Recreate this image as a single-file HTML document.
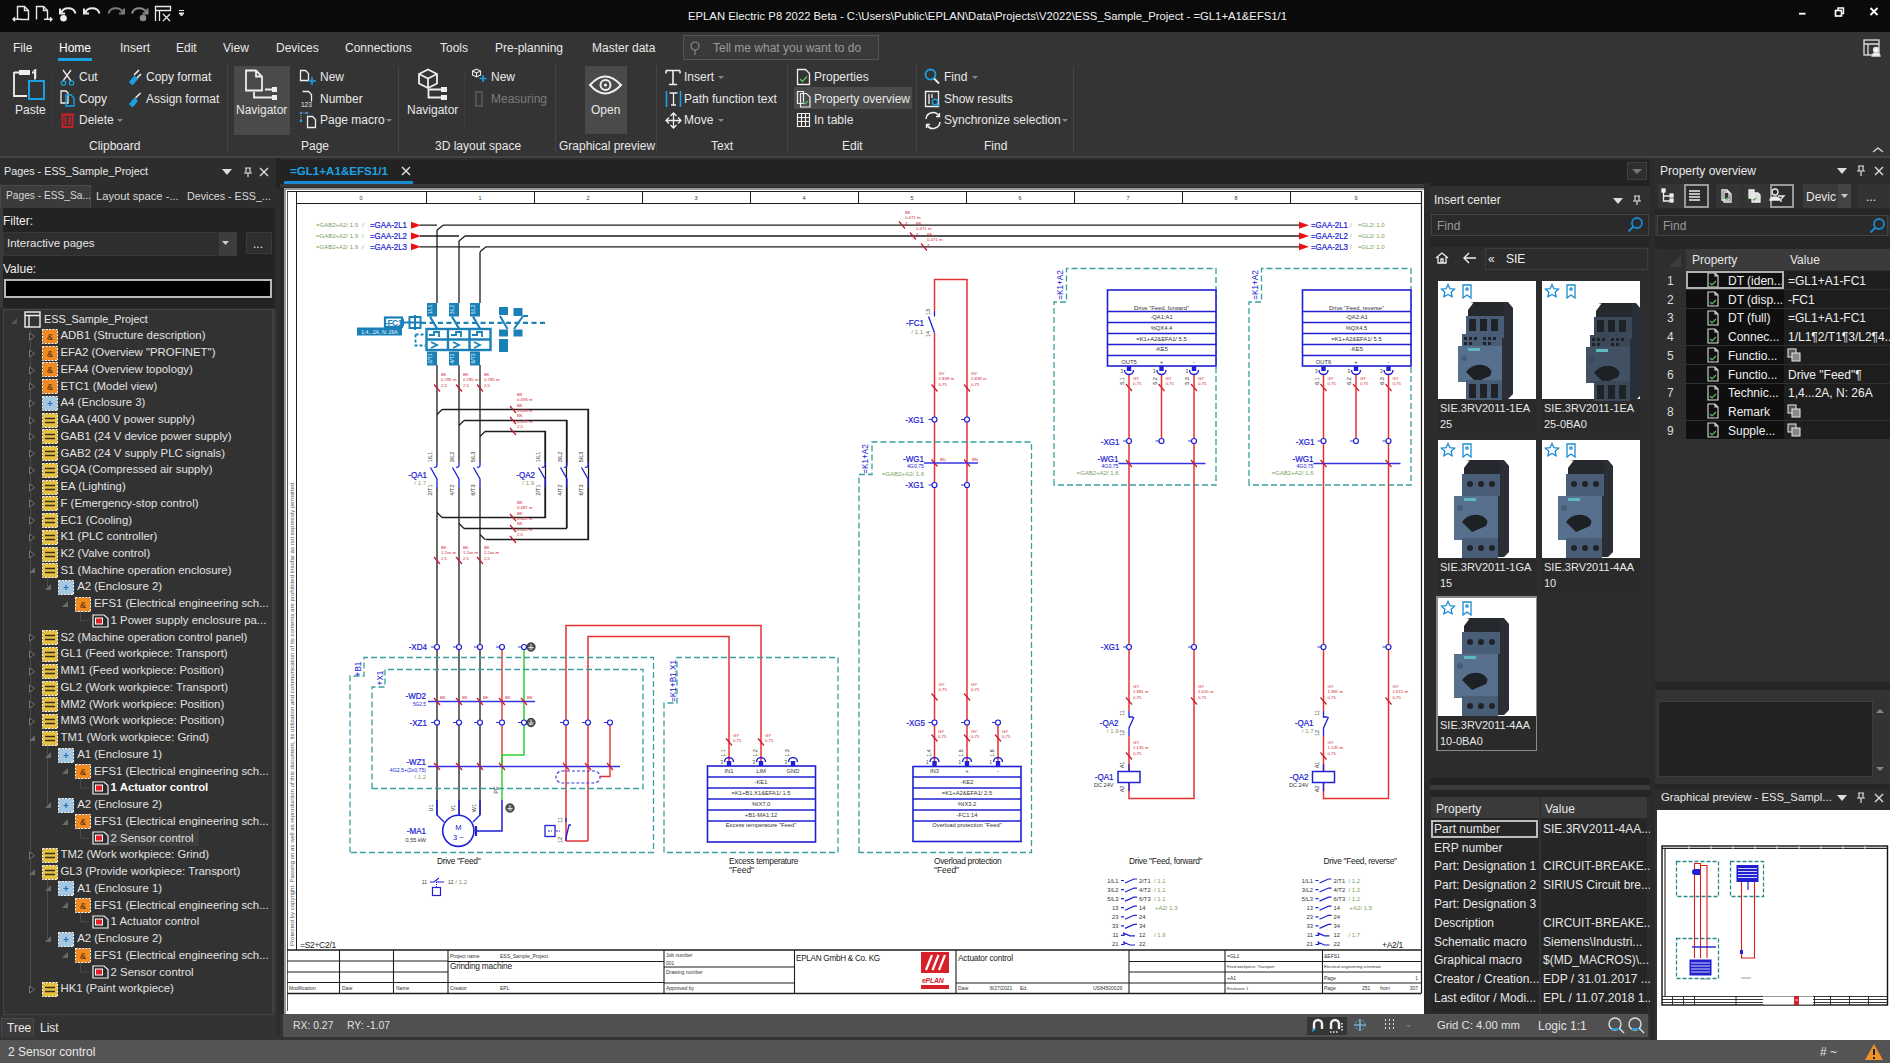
<!DOCTYPE html><html><head><meta charset="utf-8"><style>
html,body{margin:0;padding:0;}
body{width:1890px;height:1063px;position:relative;overflow:hidden;background:#333;font-family:"Liberation Sans", sans-serif;}
.a{position:absolute;}
.t{position:absolute;white-space:nowrap;line-height:1;font-family:"Liberation Sans", sans-serif;}
</style></head><body>
<div class="a" style="left:0px;top:0px;width:1890px;height:32px;background:#0a0a0a;"></div>
<div class="t" style="left:688px;top:11.4px;font-size:11.3px;color:#f0f0f0;">EPLAN Electric P8 2022 Beta - C:\Users\Public\EPLAN\Data\Projects\V2022\ESS_Sample_Project - =GL1+A1&amp;EFS1/1</div>
<svg class="a" style="left:0;top:0" width="200" height="32" viewBox="0 0 200 32" fill="none" stroke="#e8e8e8" stroke-width="1.4">
<path d="M17.5 19V6.5h7l4 4V19.5h-8" /><path d="M24.5 6.5v4h4"/><path d="M13 19.3h8 M15 17.3l-2 2 2 2"/>
<path d="M36.5 19.5V6.5h7l4 4V19" /><path d="M43.5 6.5v4h4"/><path d="M44 19.3h8 M50 17.3l2 2-2 2"/>
<path d="M61 13.5a7.5 7 0 0 1 14.5 0" stroke-width="2"/><path d="M60 8.5v5h5" stroke-width="2"/><circle cx="63.5" cy="18.3" r="3.3" fill="#f0f0f0" stroke="none"/>
<path d="M85 13.5a7.5 7 0 0 1 14.5 0" stroke-width="2"/><path d="M84 8.5v5h5" stroke-width="2"/>
<path d="M108.5 13.5a7.5 7 0 0 1 14.5 0" stroke="#7a7a7a" stroke-width="2"/><path d="M124 8.5v5h-5" stroke="#7a7a7a" stroke-width="2"/>
<path d="M132 13.5a7.5 7 0 0 1 14.5 0" stroke="#8a8a8a" stroke-width="2"/><path d="M147.5 8.5v5h-5" stroke="#8a8a8a" stroke-width="2"/><circle cx="143" cy="18" r="3.3" fill="#8a8a8a" stroke="none"/>
<path d="M155.5 21V6.5h15v4h-15 M159.5 10.5V21" stroke-width="1.3"/><path d="M163 14l7 7 M170 14l-7 7" stroke-width="1.3"/>
<path d="M179 10.5h5 M179 13h5l-2.5 3z" stroke-width="1" fill="#ddd"/>
</svg>
<svg class="a" style="left:1780px;top:0" width="110" height="32" viewBox="0 0 110 32" fill="none" stroke="#fff" stroke-width="1.8">
<path d="M19 13.7h6.5"/><rect x="55.5" y="10.5" width="6" height="5.5" stroke-width="1.6"/><path d="M58 10.5v-2.5h5.5v5.5h-2" stroke-width="1.4"/><path d="M90.5 8l7 7 M97.5 8l-7 7"/></svg>
<div class="a" style="left:0px;top:32px;width:1890px;height:126px;background:#343434;"></div>
<div class="a" style="left:0px;top:156px;width:1890px;height:2px;background:#444444;"></div>
<div class="t" style="left:13px;top:41.8px;font-size:12px;color:#e8e8e8;">File</div>
<div class="t" style="left:59px;top:41.8px;font-size:12px;color:#ffffff;">Home</div>
<div class="t" style="left:120px;top:41.8px;font-size:12px;color:#e8e8e8;">Insert</div>
<div class="t" style="left:176px;top:41.8px;font-size:12px;color:#e8e8e8;">Edit</div>
<div class="t" style="left:223px;top:41.8px;font-size:12px;color:#e8e8e8;">View</div>
<div class="t" style="left:276px;top:41.8px;font-size:12px;color:#e8e8e8;">Devices</div>
<div class="t" style="left:345px;top:41.8px;font-size:12px;color:#e8e8e8;">Connections</div>
<div class="t" style="left:440px;top:41.8px;font-size:12px;color:#e8e8e8;">Tools</div>
<div class="t" style="left:495px;top:41.8px;font-size:12px;color:#e8e8e8;">Pre-planning</div>
<div class="t" style="left:592px;top:41.8px;font-size:12px;color:#e8e8e8;">Master data</div>
<div class="a" style="left:58px;top:58px;width:34px;height:3px;background:#1ba1e2;"></div>
<div class="a" style="left:683px;top:35px;width:196px;height:25px;background:#3a3a3a;border:1px solid #555;box-sizing:border-box;"></div>
<div class="t" style="left:713px;top:41.8px;font-size:12px;color:#9a9a9a;">Tell me what you want to do</div>
<svg class="a" style="left:688;top:40" width="14" height="16" fill="none" stroke="#888" stroke-width="1.2"><circle cx="7" cy="6" r="4"/><path d="M7 10v5"/></svg>
<svg class="a" style="left:1862;top:38" width="26" height="20" fill="none" stroke="#ddd" stroke-width="1.3"><rect x="2" y="2" width="15" height="15"/><path d="M2 6h15 M6 6v11"/><circle cx="14" cy="12" r="2.5" fill="#fff"/><path d="M10 18a4 3 0 0 1 8 0z" fill="#fff"/></svg>
<div class="a" style="left:227px;top:66px;width:1px;height:86px;background:#444;"></div>
<div class="a" style="left:398px;top:66px;width:1px;height:86px;background:#444;"></div>
<div class="a" style="left:555px;top:66px;width:1px;height:86px;background:#444;"></div>
<div class="a" style="left:656px;top:66px;width:1px;height:86px;background:#444;"></div>
<div class="a" style="left:787px;top:66px;width:1px;height:86px;background:#444;"></div>
<div class="a" style="left:916px;top:66px;width:1px;height:86px;background:#444;"></div>
<div class="a" style="left:1073px;top:66px;width:1px;height:86px;background:#444;"></div>
<div class="a" style="left:234px;top:66px;width:56px;height:69px;background:#4a4a4a;"></div>
<div class="a" style="left:585px;top:66px;width:42px;height:68px;background:#4a4a4a;"></div>
<div class="a" style="left:794px;top:87px;width:118px;height:22px;background:#4a4a4a;"></div>
<div class="t" style="left:15px;top:103.8px;font-size:12px;color:#e8e8e8;">Paste</div>
<div class="t" style="left:79px;top:70.8px;font-size:12px;color:#e8e8e8;">Cut</div>
<div class="t" style="left:79px;top:92.8px;font-size:12px;color:#e8e8e8;">Copy</div>
<div class="t" style="left:79px;top:113.8px;font-size:12px;color:#e8e8e8;">Delete</div>
<div class="t" style="left:146px;top:70.8px;font-size:12px;color:#e8e8e8;">Copy format</div>
<div class="t" style="left:146px;top:92.8px;font-size:12px;color:#e8e8e8;">Assign format</div>
<div class="t" style="left:89px;top:139.8px;font-size:12px;color:#e8e8e8;">Clipboard</div>
<div class="t" style="left:236px;top:103.8px;font-size:12px;color:#e8e8e8;">Navigator</div>
<div class="t" style="left:320px;top:70.8px;font-size:12px;color:#e8e8e8;">New</div>
<div class="t" style="left:320px;top:92.8px;font-size:12px;color:#e8e8e8;">Number</div>
<div class="t" style="left:320px;top:113.8px;font-size:12px;color:#e8e8e8;">Page macro</div>
<div class="t" style="left:301px;top:139.8px;font-size:12px;color:#e8e8e8;">Page</div>
<div class="t" style="left:407px;top:103.8px;font-size:12px;color:#e8e8e8;">Navigator</div>
<div class="t" style="left:491px;top:70.8px;font-size:12px;color:#e8e8e8;">New</div>
<div class="t" style="left:491px;top:92.8px;font-size:12px;color:#7a7a7a;">Measuring</div>
<div class="t" style="left:435px;top:139.8px;font-size:12px;color:#e8e8e8;">3D layout space</div>
<div class="t" style="left:591px;top:103.8px;font-size:12px;color:#e8e8e8;">Open</div>
<div class="t" style="left:559px;top:139.8px;font-size:12px;color:#e8e8e8;">Graphical preview</div>
<div class="t" style="left:684px;top:70.8px;font-size:12px;color:#e8e8e8;">Insert</div>
<div class="t" style="left:684px;top:92.8px;font-size:12px;color:#e8e8e8;">Path function text</div>
<div class="t" style="left:684px;top:113.8px;font-size:12px;color:#e8e8e8;">Move</div>
<div class="t" style="left:711px;top:139.8px;font-size:12px;color:#e8e8e8;">Text</div>
<div class="t" style="left:814px;top:70.8px;font-size:12px;color:#e8e8e8;">Properties</div>
<div class="t" style="left:814px;top:92.8px;font-size:12px;color:#e8e8e8;">Property overview</div>
<div class="t" style="left:814px;top:113.8px;font-size:12px;color:#e8e8e8;">In table</div>
<div class="t" style="left:842px;top:139.8px;font-size:12px;color:#e8e8e8;">Edit</div>
<div class="t" style="left:944px;top:70.8px;font-size:12px;color:#e8e8e8;">Find</div>
<div class="t" style="left:944px;top:92.8px;font-size:12px;color:#e8e8e8;">Show results</div>
<div class="t" style="left:944px;top:113.8px;font-size:12px;color:#e8e8e8;">Synchronize selection</div>
<div class="t" style="left:984px;top:139.8px;font-size:12px;color:#e8e8e8;">Find</div>
<svg class="a" style="left:117;top:119" width="7" height="4"><path d="M0 0h6l-3 3z" fill="#888"/></svg>
<svg class="a" style="left:386;top:119" width="7" height="4"><path d="M0 0h6l-3 3z" fill="#888"/></svg>
<svg class="a" style="left:718;top:76" width="7" height="4"><path d="M0 0h6l-3 3z" fill="#888"/></svg>
<svg class="a" style="left:718;top:119" width="7" height="4"><path d="M0 0h6l-3 3z" fill="#888"/></svg>
<svg class="a" style="left:972;top:76" width="7" height="4"><path d="M0 0h6l-3 3z" fill="#888"/></svg>
<svg class="a" style="left:1062;top:119" width="7" height="4"><path d="M0 0h6l-3 3z" fill="#888"/></svg>
<svg class="a" style="left:1872;top:146" width="12" height="8"><path d="M1 6l5-4 5 4" fill="none" stroke="#ccc" stroke-width="1.6"/></svg>
<div class="a" style="left:52px;top:70px;width:1px;height:60px;background:#3c3c3c;"></div>
<div class="a" style="left:293px;top:70px;width:1px;height:60px;background:#3c3c3c;"></div>
<div class="a" style="left:464px;top:70px;width:1px;height:60px;background:#3c3c3c;"></div>
<svg class="a" style="left:0;top:60px" width="1100" height="80" viewBox="0 60 1100 80" fill="none" stroke="#eee" stroke-width="1.5">
<path d="M14 72.5H19 M32 72.5h3v7 M14 72v24h13" stroke-width="1.8"/><rect x="19" y="70" width="11" height="5" fill="#eee" stroke="none"/><path d="M33.5 71l2-1v8" stroke-width="1.5"/>
<rect x="29" y="81" width="15" height="18" stroke="#1ba1e2" stroke-width="2"/>
<path d="M63 70l8 11 M71 70l-8 11" stroke-width="1.3"/><circle cx="63.5" cy="83" r="2.2" stroke="#1ba1e2" stroke-width="1.2"/><circle cx="71.5" cy="83" r="2.2" stroke="#1ba1e2" stroke-width="1.2"/>
<path d="M61 91h5l2 2v10h-7z" stroke-width="1.3"/><path d="M66 95h5l3 3v8h-8z" stroke="#1ba1e2" stroke-width="1.4"/>
<path d="M62.5 115h10v12h-10z M61 114.5h13 M65.5 117v8 M69.5 117v8" stroke="#c8202a" stroke-width="1.8"/>
<path d="M129.5 82l5-6 3 3-5 6z" fill="#1ba1e2" stroke="#1ba1e2" stroke-width="1"/><path d="M134 75l5-5 M137 78l4-4" stroke="#eee" stroke-width="1.6"/>
<path d="M129.5 104l5-6 3 3-5 6z" fill="#1ba1e2" stroke="#1ba1e2" stroke-width="1"/><path d="M135.5 98l5-5" stroke="#eee" stroke-width="1.6"/>
<path d="M246 70.5h10l6 6v14h-16z M256 70.5v6h6" stroke-width="1.8"/><path d="M265 89.5h8 M254 92v5.5h19" stroke-width="1.8"/><rect x="272" y="87" width="5" height="5" fill="#eee" stroke="none"/><rect x="272" y="95" width="5" height="5" fill="#eee" stroke="none"/>
<path d="M300.5 70.5h5l3 3v7h-8z" stroke-width="1.3"/><path d="M312 77v8 M308 81h8" stroke="#1ba1e2" stroke-width="1.6"/>
<path d="M302.5 91.5h6l3 3v7" stroke-width="1.3"/><text x="301" y="107" font-size="6.5" fill="#eee" stroke="none" font-family="Liberation Sans">123</text>
<path d="M307.5 116.5h5l3 3v8h-8z" stroke-width="1.3"/><path d="M301 113h6 M301 113v7" stroke="#aaa" stroke-width="1" stroke-dasharray="1 1"/><circle cx="301" cy="113" r="1.3" fill="#1ba1e2" stroke="none"/><circle cx="307" cy="113" r="1.3" fill="#1ba1e2" stroke="none"/><circle cx="301" cy="121" r="1.3" fill="#1ba1e2" stroke="none"/><circle cx="304" cy="113" r="1.1" fill="#d02020" stroke="none"/>
<path d="M419 74l9-4.5 9 4.5v9.5l-9 4.5-9-4.5z M419 74l9 4.5 9-4.5 M428 78.5v9.5" stroke-width="1.8"/><path d="M428.5 89v8.5h13 M428.5 89.5h13" stroke-width="1.8"/><rect x="441" y="87" width="6" height="5" fill="#eee" stroke="none"/><rect x="441" y="95" width="6" height="5" fill="#eee" stroke="none"/>
<path d="M472.5 71l4-2 4 2v4l-4 2-4-2z M472.5 71l4 2 4-2 M476.5 73v4" stroke-width="1.1"/><path d="M483 75v7 M479.5 78.5h7" stroke="#1ba1e2" stroke-width="1.6"/>
<rect x="476" y="92" width="6" height="14" stroke="#666" stroke-width="1.2"/>
<path d="M590 85q15-17 31 0q-16 17-31 0z" stroke-width="2"/><circle cx="605.5" cy="85" r="5" stroke-width="2"/><circle cx="605.5" cy="85" r="1.6" fill="#eee" stroke="none"/>
<path d="M666 70.5h14 M673 70.5v14 M669 84.5h8 M666 70.5v3 M680 70.5v3" stroke-width="1.6"/>
<path d="M666.5 91v16 M680.5 91v16" stroke="#1ba1e2" stroke-width="1.6"/><path d="M669.5 93h8 M673.5 93v12 M671 105h5" stroke-width="1.3"/>
<path d="M673.5 113v15 M666 120.5h15 M670.5 116l3-3 3 3 M670.5 125l3 3 3-3 M669 117.5l-3 3 3 3 M678 117.5l3 3-3 3" stroke-width="1.3"/>
<path d="M797.5 69.5h8l4 4v11h-12z" stroke-width="1.3"/><path d="M800 79l2.5 2.5 4.5-5" stroke="#5cb85c" stroke-width="1.5"/>
<path d="M797.5 91.5h6v12h-6z M800.5 93.5h6l3.5 3.5v10h-9.5z" stroke-width="1.2"/><path d="M803 102l2 2 3-3" stroke="#5cb85c" stroke-width="1.2"/>
<path d="M797.5 113.5h12v13h-12z M797.5 117.5h12 M797.5 121.5h12 M801.5 113.5v13 M805.5 113.5v13" stroke-width="1.2"/>
<circle cx="930.5" cy="74.5" r="5" stroke="#1ba1e2" stroke-width="1.8"/><path d="M934 78.5l5 5" stroke-width="1.8"/>
<path d="M925.5 91.5h13v15h-13z M929 94v10 M932 94v4" stroke-width="1.3"/><circle cx="935" cy="102" r="2.8" stroke="#1ba1e2" stroke-width="1.4"/><path d="M937 104l2.5 2.5" stroke="#1ba1e2" stroke-width="1.4"/>
<path d="M926 119a7 7 0 0 1 13-3 M940 122a7 7 0 0 1 -13 3" stroke-width="1.5"/><path d="M939.5 113v3.5h-3.5 M926.5 128v-3.5h3.5" stroke-width="1.3"/>
</svg>
<div class="a" style="left:0px;top:158px;width:280px;height:882px;background:#2d2d2d;"></div>
<div class="t" style="left:4px;top:165.9px;font-size:10.8px;color:#e8e8e8;">Pages - ESS_Sample_Project</div>
<svg class="a" style="left:221px;top:166px" width="55" height="12"><path d="M1 3h10l-5 6z" fill="#ddd"/><path d="M24 2h6M25 2v5h4v-5M27 7v4M23 7h8" stroke="#ddd" stroke-width="1.2" fill="none"/><path d="M39 2l8 8M47 2l-8 8" stroke="#ddd" stroke-width="1.4"/></svg>
<div class="a" style="left:0px;top:185px;width:91px;height:23px;background:#3b3b3b;border:1px solid #4a4a4a;border-bottom:none;box-sizing:border-box;"></div>
<div class="t" style="left:6px;top:191.4px;font-size:10.2px;color:#d8d8d8;">Pages - ESS_Sa...</div>
<div class="t" style="left:96px;top:190.5px;font-size:11.2px;color:#d8d8d8;">Layout space -...</div>
<div class="t" style="left:187px;top:190.9px;font-size:10.7px;color:#d8d8d8;">Devices - ESS_...</div>
<div class="a" style="left:0px;top:208px;width:275px;height:100px;background:#232323;"></div>
<div class="a" style="left:0px;top:208px;width:3px;height:100px;background:#3a3a3a;"></div>
<div class="t" style="left:3px;top:214.8px;font-size:12px;color:#f0f0f0;">Filter:</div>
<div class="a" style="left:3px;top:232px;width:234px;height:24px;background:#2e2e2e;border:1px solid #383838;box-sizing:border-box;"></div>
<div class="a" style="left:219px;top:232px;width:18px;height:24px;background:#3d3d3d;"></div>
<div class="t" style="left:7px;top:238.3px;font-size:11.5px;color:#e6e6e6;">Interactive pages</div>
<svg class="a" style="left:222px;top:241px" width="8" height="5"><path d="M0 0h7l-3.5 4z" fill="#ccc"/></svg>
<div class="a" style="left:246px;top:232px;width:26px;height:22px;background:#2e2e2e;border:1px solid #3a3a3a;box-sizing:border-box;"></div>
<div class="t" style="left:253px;top:237.8px;font-size:12px;color:#e6e6e6;">...</div>
<div class="t" style="left:3px;top:262.8px;font-size:12px;color:#f0f0f0;">Value:</div>
<div class="a" style="left:4px;top:279px;width:268px;height:19px;background:#000;border:2px solid #b8b8b8;box-sizing:border-box;"></div>
<div class="a" style="left:3px;top:309px;width:270px;height:706px;background:#323232;border:1px solid #444;box-sizing:border-box;"></div>
<div class="a" style="left:273px;top:309px;width:3px;height:706px;background:#3a3a3a;"></div>
<svg class="a" style="left:0;top:0" width="280" height="1063"><g stroke="#4c4c4c" stroke-width="1" fill="none"><path d="M30.5 330V990"/><path d="M47.5 577.4V587.1"/><path d="M47.5 744.8V804.7"/><path d="M47.5 878.7V938.6"/><path d="M80.5 610.8V620.6H89"/><path d="M80.5 778.2V788.0H89"/><path d="M80.5 828.5V838.2H89"/><path d="M80.5 912.2V921.9H89"/><path d="M80.5 962.4V972.1H89"/></g></svg>
<svg class="a" style="left:24px;top:311px" width="17" height="17"><rect x="1" y="1" width="15" height="15" fill="none" stroke="#eee" stroke-width="1.4"/><path d="M1 4.5h15 M5 4.5v11.5" stroke="#eee" stroke-width="1.4"/></svg>
<div class="t" style="left:44px;top:313.9px;font-size:10.8px;color:#e8e8e8;">ESS_Sample_Project</div>
<svg class="a" style="left:10px;top:317px" width="8" height="8"><path d="M7 1v6h-6z" fill="#555"/></svg>
<svg class="a" style="left:27.5px;top:332.0px" width="8" height="9"><path d="M1.5 1l5 3.5-5 3.5z" fill="#2b2b2b" stroke="#777"/></svg>
<svg class="a" style="left:41.5px;top:329.0px" width="16" height="15"><rect x="0.5" y="0.5" width="15" height="14" fill="#f28a22" stroke="#fff" stroke-dasharray="2 1.3"/><text x="8" y="11" font-size="9" text-anchor="middle" fill="#4a2a10" font-family="Liberation Sans">&amp;</text></svg>
<div class="t" style="left:60.5px;top:330.3px;font-size:11.4px;color:#e2e2e2;">ADB1 (Structure description)</div>
<svg class="a" style="left:27.5px;top:348.7px" width="8" height="9"><path d="M1.5 1l5 3.5-5 3.5z" fill="#2b2b2b" stroke="#777"/></svg>
<svg class="a" style="left:41.5px;top:345.74px" width="16" height="15"><rect x="0.5" y="0.5" width="15" height="14" fill="#f28a22" stroke="#fff" stroke-dasharray="2 1.3"/><text x="8" y="11" font-size="9" text-anchor="middle" fill="#4a2a10" font-family="Liberation Sans">&amp;</text></svg>
<div class="t" style="left:60.5px;top:347.1px;font-size:11.4px;color:#e2e2e2;">EFA2 (Overview "PROFINET")</div>
<svg class="a" style="left:27.5px;top:365.5px" width="8" height="9"><path d="M1.5 1l5 3.5-5 3.5z" fill="#2b2b2b" stroke="#777"/></svg>
<svg class="a" style="left:41.5px;top:362.48px" width="16" height="15"><rect x="0.5" y="0.5" width="15" height="14" fill="#f28a22" stroke="#fff" stroke-dasharray="2 1.3"/><text x="8" y="11" font-size="9" text-anchor="middle" fill="#4a2a10" font-family="Liberation Sans">&amp;</text></svg>
<div class="t" style="left:60.5px;top:363.8px;font-size:11.4px;color:#e2e2e2;">EFA4 (Overview topology)</div>
<svg class="a" style="left:27.5px;top:382.2px" width="8" height="9"><path d="M1.5 1l5 3.5-5 3.5z" fill="#2b2b2b" stroke="#777"/></svg>
<svg class="a" style="left:41.5px;top:379.22px" width="16" height="15"><rect x="0.5" y="0.5" width="15" height="14" fill="#f28a22" stroke="#fff" stroke-dasharray="2 1.3"/><text x="8" y="11" font-size="9" text-anchor="middle" fill="#4a2a10" font-family="Liberation Sans">&amp;</text></svg>
<div class="t" style="left:60.5px;top:380.6px;font-size:11.4px;color:#e2e2e2;">ETC1 (Model view)</div>
<svg class="a" style="left:27.5px;top:399.0px" width="8" height="9"><path d="M1.5 1l5 3.5-5 3.5z" fill="#2b2b2b" stroke="#777"/></svg>
<svg class="a" style="left:41.5px;top:395.96px" width="16" height="15"><rect x="0.5" y="0.5" width="15" height="14" fill="#a4c8e4" stroke="#fff" stroke-dasharray="2 1.3"/><path d="M8 5v5 M5.5 7.5h5" stroke="#2a6fb0" stroke-width="1.2"/></svg>
<div class="t" style="left:60.5px;top:397.3px;font-size:11.4px;color:#e2e2e2;">A4 (Enclosure 3)</div>
<svg class="a" style="left:27.5px;top:415.7px" width="8" height="9"><path d="M1.5 1l5 3.5-5 3.5z" fill="#2b2b2b" stroke="#777"/></svg>
<svg class="a" style="left:41.5px;top:412.7px" width="16" height="15"><rect x="0.5" y="0.5" width="15" height="14" fill="#e6c040" stroke="#fff" stroke-dasharray="2 1.3"/><path d="M3 5.5h10 M3 9.5h10" stroke="#3a3020" stroke-width="1.6"/></svg>
<div class="t" style="left:60.5px;top:414.0px;font-size:11.4px;color:#e2e2e2;">GAA (400 V power supply)</div>
<svg class="a" style="left:27.5px;top:432.4px" width="8" height="9"><path d="M1.5 1l5 3.5-5 3.5z" fill="#2b2b2b" stroke="#777"/></svg>
<svg class="a" style="left:41.5px;top:429.44px" width="16" height="15"><rect x="0.5" y="0.5" width="15" height="14" fill="#e6c040" stroke="#fff" stroke-dasharray="2 1.3"/><path d="M3 5.5h10 M3 9.5h10" stroke="#3a3020" stroke-width="1.6"/></svg>
<div class="t" style="left:60.5px;top:430.8px;font-size:11.4px;color:#e2e2e2;">GAB1 (24 V device power supply)</div>
<svg class="a" style="left:27.5px;top:449.2px" width="8" height="9"><path d="M1.5 1l5 3.5-5 3.5z" fill="#2b2b2b" stroke="#777"/></svg>
<svg class="a" style="left:41.5px;top:446.18px" width="16" height="15"><rect x="0.5" y="0.5" width="15" height="14" fill="#e6c040" stroke="#fff" stroke-dasharray="2 1.3"/><path d="M3 5.5h10 M3 9.5h10" stroke="#3a3020" stroke-width="1.6"/></svg>
<div class="t" style="left:60.5px;top:447.5px;font-size:11.4px;color:#e2e2e2;">GAB2 (24 V supply PLC signals)</div>
<svg class="a" style="left:27.5px;top:465.9px" width="8" height="9"><path d="M1.5 1l5 3.5-5 3.5z" fill="#2b2b2b" stroke="#777"/></svg>
<svg class="a" style="left:41.5px;top:462.91999999999996px" width="16" height="15"><rect x="0.5" y="0.5" width="15" height="14" fill="#e6c040" stroke="#fff" stroke-dasharray="2 1.3"/><path d="M3 5.5h10 M3 9.5h10" stroke="#3a3020" stroke-width="1.6"/></svg>
<div class="t" style="left:60.5px;top:464.3px;font-size:11.4px;color:#e2e2e2;">GQA (Compressed air supply)</div>
<svg class="a" style="left:27.5px;top:482.7px" width="8" height="9"><path d="M1.5 1l5 3.5-5 3.5z" fill="#2b2b2b" stroke="#777"/></svg>
<svg class="a" style="left:41.5px;top:479.65999999999997px" width="16" height="15"><rect x="0.5" y="0.5" width="15" height="14" fill="#e6c040" stroke="#fff" stroke-dasharray="2 1.3"/><path d="M3 5.5h10 M3 9.5h10" stroke="#3a3020" stroke-width="1.6"/></svg>
<div class="t" style="left:60.5px;top:481.0px;font-size:11.4px;color:#e2e2e2;">EA (Lighting)</div>
<svg class="a" style="left:27.5px;top:499.4px" width="8" height="9"><path d="M1.5 1l5 3.5-5 3.5z" fill="#2b2b2b" stroke="#777"/></svg>
<svg class="a" style="left:41.5px;top:496.4px" width="16" height="15"><rect x="0.5" y="0.5" width="15" height="14" fill="#e6c040" stroke="#fff" stroke-dasharray="2 1.3"/><path d="M3 5.5h10 M3 9.5h10" stroke="#3a3020" stroke-width="1.6"/></svg>
<div class="t" style="left:60.5px;top:497.7px;font-size:11.4px;color:#e2e2e2;">F (Emergency-stop control)</div>
<svg class="a" style="left:27.5px;top:516.1px" width="8" height="9"><path d="M1.5 1l5 3.5-5 3.5z" fill="#2b2b2b" stroke="#777"/></svg>
<svg class="a" style="left:41.5px;top:513.14px" width="16" height="15"><rect x="0.5" y="0.5" width="15" height="14" fill="#e6c040" stroke="#fff" stroke-dasharray="2 1.3"/><path d="M3 5.5h10 M3 9.5h10" stroke="#3a3020" stroke-width="1.6"/></svg>
<div class="t" style="left:60.5px;top:514.5px;font-size:11.4px;color:#e2e2e2;">EC1 (Cooling)</div>
<svg class="a" style="left:27.5px;top:532.9px" width="8" height="9"><path d="M1.5 1l5 3.5-5 3.5z" fill="#2b2b2b" stroke="#777"/></svg>
<svg class="a" style="left:41.5px;top:529.88px" width="16" height="15"><rect x="0.5" y="0.5" width="15" height="14" fill="#e6c040" stroke="#fff" stroke-dasharray="2 1.3"/><path d="M3 5.5h10 M3 9.5h10" stroke="#3a3020" stroke-width="1.6"/></svg>
<div class="t" style="left:60.5px;top:531.2px;font-size:11.4px;color:#e2e2e2;">K1 (PLC controller)</div>
<svg class="a" style="left:27.5px;top:549.6px" width="8" height="9"><path d="M1.5 1l5 3.5-5 3.5z" fill="#2b2b2b" stroke="#777"/></svg>
<svg class="a" style="left:41.5px;top:546.62px" width="16" height="15"><rect x="0.5" y="0.5" width="15" height="14" fill="#e6c040" stroke="#fff" stroke-dasharray="2 1.3"/><path d="M3 5.5h10 M3 9.5h10" stroke="#3a3020" stroke-width="1.6"/></svg>
<div class="t" style="left:60.5px;top:548.0px;font-size:11.4px;color:#e2e2e2;">K2 (Valve control)</div>
<svg class="a" style="left:27.5px;top:566.4px" width="8" height="8"><path d="M7 1v6h-6z" fill="#6a6a6a"/></svg>
<svg class="a" style="left:41.5px;top:563.36px" width="16" height="15"><rect x="0.5" y="0.5" width="15" height="14" fill="#e6c040" stroke="#fff" stroke-dasharray="2 1.3"/><path d="M3 5.5h10 M3 9.5h10" stroke="#3a3020" stroke-width="1.6"/></svg>
<div class="t" style="left:60.5px;top:564.7px;font-size:11.4px;color:#e2e2e2;">S1 (Machine operation enclosure)</div>
<svg class="a" style="left:44.2px;top:583.1px" width="8" height="8"><path d="M7 1v6h-6z" fill="#6a6a6a"/></svg>
<svg class="a" style="left:58.2px;top:580.0999999999999px" width="16" height="15"><rect x="0.5" y="0.5" width="15" height="14" fill="#a4c8e4" stroke="#fff" stroke-dasharray="2 1.3"/><path d="M8 5v5 M5.5 7.5h5" stroke="#2a6fb0" stroke-width="1.2"/></svg>
<div class="t" style="left:77.2px;top:581.4px;font-size:11.4px;color:#e2e2e2;">A2 (Enclosure 2)</div>
<svg class="a" style="left:60.9px;top:599.8px" width="8" height="8"><path d="M7 1v6h-6z" fill="#6a6a6a"/></svg>
<svg class="a" style="left:74.9px;top:596.8399999999999px" width="16" height="15"><rect x="0.5" y="0.5" width="15" height="14" fill="#f28a22" stroke="#fff" stroke-dasharray="2 1.3"/><text x="8" y="11" font-size="9" text-anchor="middle" fill="#4a2a10" font-family="Liberation Sans">&amp;</text></svg>
<div class="t" style="left:93.9px;top:598.2px;font-size:11.4px;color:#e2e2e2;">EFS1 (Electrical engineering sch...</div>
<svg class="a" style="left:91.6px;top:613.5799999999999px" width="17" height="14"><path d="M1 1h11l4 3.5v8.5h-15z" fill="#2b2b2b" stroke="#f0f0f0" stroke-width="1.2"/><rect x="3" y="3.5" width="8" height="7" fill="#fff"/><rect x="4" y="4.5" width="6" height="5" fill="#e0202a"/></svg>
<div class="t" style="left:110.6px;top:614.9px;font-size:11.4px;color:#e2e2e2;">1 Power supply enclosure pa...</div>
<svg class="a" style="left:27.5px;top:633.3px" width="8" height="9"><path d="M1.5 1l5 3.5-5 3.5z" fill="#2b2b2b" stroke="#777"/></svg>
<svg class="a" style="left:41.5px;top:630.3199999999999px" width="16" height="15"><rect x="0.5" y="0.5" width="15" height="14" fill="#e6c040" stroke="#fff" stroke-dasharray="2 1.3"/><path d="M3 5.5h10 M3 9.5h10" stroke="#3a3020" stroke-width="1.6"/></svg>
<div class="t" style="left:60.5px;top:631.7px;font-size:11.4px;color:#e2e2e2;">S2 (Machine operation control panel)</div>
<svg class="a" style="left:27.5px;top:650.1px" width="8" height="9"><path d="M1.5 1l5 3.5-5 3.5z" fill="#2b2b2b" stroke="#777"/></svg>
<svg class="a" style="left:41.5px;top:647.06px" width="16" height="15"><rect x="0.5" y="0.5" width="15" height="14" fill="#e6c040" stroke="#fff" stroke-dasharray="2 1.3"/><path d="M3 5.5h10 M3 9.5h10" stroke="#3a3020" stroke-width="1.6"/></svg>
<div class="t" style="left:60.5px;top:648.4px;font-size:11.4px;color:#e2e2e2;">GL1 (Feed workpiece: Transport)</div>
<svg class="a" style="left:27.5px;top:666.8px" width="8" height="9"><path d="M1.5 1l5 3.5-5 3.5z" fill="#2b2b2b" stroke="#777"/></svg>
<svg class="a" style="left:41.5px;top:663.8px" width="16" height="15"><rect x="0.5" y="0.5" width="15" height="14" fill="#e6c040" stroke="#fff" stroke-dasharray="2 1.3"/><path d="M3 5.5h10 M3 9.5h10" stroke="#3a3020" stroke-width="1.6"/></svg>
<div class="t" style="left:60.5px;top:665.1px;font-size:11.4px;color:#e2e2e2;">MM1 (Feed workpiece: Position)</div>
<svg class="a" style="left:27.5px;top:683.5px" width="8" height="9"><path d="M1.5 1l5 3.5-5 3.5z" fill="#2b2b2b" stroke="#777"/></svg>
<svg class="a" style="left:41.5px;top:680.54px" width="16" height="15"><rect x="0.5" y="0.5" width="15" height="14" fill="#e6c040" stroke="#fff" stroke-dasharray="2 1.3"/><path d="M3 5.5h10 M3 9.5h10" stroke="#3a3020" stroke-width="1.6"/></svg>
<div class="t" style="left:60.5px;top:681.9px;font-size:11.4px;color:#e2e2e2;">GL2 (Work workpiece: Transport)</div>
<svg class="a" style="left:27.5px;top:700.3px" width="8" height="9"><path d="M1.5 1l5 3.5-5 3.5z" fill="#2b2b2b" stroke="#777"/></svg>
<svg class="a" style="left:41.5px;top:697.28px" width="16" height="15"><rect x="0.5" y="0.5" width="15" height="14" fill="#e6c040" stroke="#fff" stroke-dasharray="2 1.3"/><path d="M3 5.5h10 M3 9.5h10" stroke="#3a3020" stroke-width="1.6"/></svg>
<div class="t" style="left:60.5px;top:698.6px;font-size:11.4px;color:#e2e2e2;">MM2 (Work workpiece: Position)</div>
<svg class="a" style="left:27.5px;top:717.0px" width="8" height="9"><path d="M1.5 1l5 3.5-5 3.5z" fill="#2b2b2b" stroke="#777"/></svg>
<svg class="a" style="left:41.5px;top:714.02px" width="16" height="15"><rect x="0.5" y="0.5" width="15" height="14" fill="#e6c040" stroke="#fff" stroke-dasharray="2 1.3"/><path d="M3 5.5h10 M3 9.5h10" stroke="#3a3020" stroke-width="1.6"/></svg>
<div class="t" style="left:60.5px;top:715.4px;font-size:11.4px;color:#e2e2e2;">MM3 (Work workpiece: Position)</div>
<svg class="a" style="left:27.5px;top:733.8px" width="8" height="8"><path d="M7 1v6h-6z" fill="#6a6a6a"/></svg>
<svg class="a" style="left:41.5px;top:730.76px" width="16" height="15"><rect x="0.5" y="0.5" width="15" height="14" fill="#e6c040" stroke="#fff" stroke-dasharray="2 1.3"/><path d="M3 5.5h10 M3 9.5h10" stroke="#3a3020" stroke-width="1.6"/></svg>
<div class="t" style="left:60.5px;top:732.1px;font-size:11.4px;color:#e2e2e2;">TM1 (Work workpiece: Grind)</div>
<svg class="a" style="left:44.2px;top:750.5px" width="8" height="8"><path d="M7 1v6h-6z" fill="#6a6a6a"/></svg>
<svg class="a" style="left:58.2px;top:747.5px" width="16" height="15"><rect x="0.5" y="0.5" width="15" height="14" fill="#a4c8e4" stroke="#fff" stroke-dasharray="2 1.3"/><path d="M8 5v5 M5.5 7.5h5" stroke="#2a6fb0" stroke-width="1.2"/></svg>
<div class="t" style="left:77.2px;top:748.8px;font-size:11.4px;color:#e2e2e2;">A1 (Enclosure 1)</div>
<svg class="a" style="left:60.9px;top:767.2px" width="8" height="8"><path d="M7 1v6h-6z" fill="#6a6a6a"/></svg>
<svg class="a" style="left:74.9px;top:764.24px" width="16" height="15"><rect x="0.5" y="0.5" width="15" height="14" fill="#f28a22" stroke="#fff" stroke-dasharray="2 1.3"/><text x="8" y="11" font-size="9" text-anchor="middle" fill="#4a2a10" font-family="Liberation Sans">&amp;</text></svg>
<div class="t" style="left:93.9px;top:765.6px;font-size:11.4px;color:#e2e2e2;">EFS1 (Electrical engineering sch...</div>
<svg class="a" style="left:91.6px;top:780.98px" width="17" height="14"><path d="M1 1h11l4 3.5v8.5h-15z" fill="#2b2b2b" stroke="#f0f0f0" stroke-width="1.2"/><rect x="3" y="3.5" width="8" height="7" fill="#fff"/><rect x="4" y="4.5" width="6" height="5" fill="#e0202a"/></svg>
<div class="t" style="left:110.6px;top:782.3px;font-size:11.4px;color:#ffffff;font-weight:bold;">1 Actuator control</div>
<svg class="a" style="left:44.2px;top:800.7px" width="8" height="8"><path d="M7 1v6h-6z" fill="#6a6a6a"/></svg>
<svg class="a" style="left:58.2px;top:797.72px" width="16" height="15"><rect x="0.5" y="0.5" width="15" height="14" fill="#a4c8e4" stroke="#fff" stroke-dasharray="2 1.3"/><path d="M8 5v5 M5.5 7.5h5" stroke="#2a6fb0" stroke-width="1.2"/></svg>
<div class="t" style="left:77.2px;top:799.1px;font-size:11.4px;color:#e2e2e2;">A2 (Enclosure 2)</div>
<svg class="a" style="left:60.9px;top:817.5px" width="8" height="8"><path d="M7 1v6h-6z" fill="#6a6a6a"/></svg>
<svg class="a" style="left:74.9px;top:814.46px" width="16" height="15"><rect x="0.5" y="0.5" width="15" height="14" fill="#f28a22" stroke="#fff" stroke-dasharray="2 1.3"/><text x="8" y="11" font-size="9" text-anchor="middle" fill="#4a2a10" font-family="Liberation Sans">&amp;</text></svg>
<div class="t" style="left:93.9px;top:815.8px;font-size:11.4px;color:#e2e2e2;">EFS1 (Electrical engineering sch...</div>
<svg class="a" style="left:91.6px;top:831.1999999999999px" width="17" height="14"><path d="M1 1h11l4 3.5v8.5h-15z" fill="#2b2b2b" stroke="#f0f0f0" stroke-width="1.2"/><rect x="3" y="3.5" width="8" height="7" fill="#fff"/><rect x="4" y="4.5" width="6" height="5" fill="#e0202a"/></svg>
<div class="a" style="left:108.6px;top:830.1999999999999px;width:90px;height:16px;background:#3e3e3e;"></div>
<div class="t" style="left:110.6px;top:832.5px;font-size:11.4px;color:#e2e2e2;">2 Sensor control</div>
<svg class="a" style="left:27.5px;top:850.9px" width="8" height="9"><path d="M1.5 1l5 3.5-5 3.5z" fill="#2b2b2b" stroke="#777"/></svg>
<svg class="a" style="left:41.5px;top:847.9399999999999px" width="16" height="15"><rect x="0.5" y="0.5" width="15" height="14" fill="#e6c040" stroke="#fff" stroke-dasharray="2 1.3"/><path d="M3 5.5h10 M3 9.5h10" stroke="#3a3020" stroke-width="1.6"/></svg>
<div class="t" style="left:60.5px;top:849.3px;font-size:11.4px;color:#e2e2e2;">TM2 (Work workpiece: Grind)</div>
<svg class="a" style="left:27.5px;top:867.7px" width="8" height="8"><path d="M7 1v6h-6z" fill="#6a6a6a"/></svg>
<svg class="a" style="left:41.5px;top:864.68px" width="16" height="15"><rect x="0.5" y="0.5" width="15" height="14" fill="#e6c040" stroke="#fff" stroke-dasharray="2 1.3"/><path d="M3 5.5h10 M3 9.5h10" stroke="#3a3020" stroke-width="1.6"/></svg>
<div class="t" style="left:60.5px;top:866.0px;font-size:11.4px;color:#e2e2e2;">GL3 (Provide workpiece: Transport)</div>
<svg class="a" style="left:44.2px;top:884.4px" width="8" height="8"><path d="M7 1v6h-6z" fill="#6a6a6a"/></svg>
<svg class="a" style="left:58.2px;top:881.42px" width="16" height="15"><rect x="0.5" y="0.5" width="15" height="14" fill="#a4c8e4" stroke="#fff" stroke-dasharray="2 1.3"/><path d="M8 5v5 M5.5 7.5h5" stroke="#2a6fb0" stroke-width="1.2"/></svg>
<div class="t" style="left:77.2px;top:882.8px;font-size:11.4px;color:#e2e2e2;">A1 (Enclosure 1)</div>
<svg class="a" style="left:60.9px;top:901.2px" width="8" height="8"><path d="M7 1v6h-6z" fill="#6a6a6a"/></svg>
<svg class="a" style="left:74.9px;top:898.16px" width="16" height="15"><rect x="0.5" y="0.5" width="15" height="14" fill="#f28a22" stroke="#fff" stroke-dasharray="2 1.3"/><text x="8" y="11" font-size="9" text-anchor="middle" fill="#4a2a10" font-family="Liberation Sans">&amp;</text></svg>
<div class="t" style="left:93.9px;top:899.5px;font-size:11.4px;color:#e2e2e2;">EFS1 (Electrical engineering sch...</div>
<svg class="a" style="left:91.6px;top:914.9px" width="17" height="14"><path d="M1 1h11l4 3.5v8.5h-15z" fill="#2b2b2b" stroke="#f0f0f0" stroke-width="1.2"/><rect x="3" y="3.5" width="8" height="7" fill="#fff"/><rect x="4" y="4.5" width="6" height="5" fill="#e0202a"/></svg>
<div class="t" style="left:110.6px;top:916.2px;font-size:11.4px;color:#e2e2e2;">1 Actuator control</div>
<svg class="a" style="left:44.2px;top:934.6px" width="8" height="8"><path d="M7 1v6h-6z" fill="#6a6a6a"/></svg>
<svg class="a" style="left:58.2px;top:931.64px" width="16" height="15"><rect x="0.5" y="0.5" width="15" height="14" fill="#a4c8e4" stroke="#fff" stroke-dasharray="2 1.3"/><path d="M8 5v5 M5.5 7.5h5" stroke="#2a6fb0" stroke-width="1.2"/></svg>
<div class="t" style="left:77.2px;top:933.0px;font-size:11.4px;color:#e2e2e2;">A2 (Enclosure 2)</div>
<svg class="a" style="left:60.9px;top:951.4px" width="8" height="8"><path d="M7 1v6h-6z" fill="#6a6a6a"/></svg>
<svg class="a" style="left:74.9px;top:948.38px" width="16" height="15"><rect x="0.5" y="0.5" width="15" height="14" fill="#f28a22" stroke="#fff" stroke-dasharray="2 1.3"/><text x="8" y="11" font-size="9" text-anchor="middle" fill="#4a2a10" font-family="Liberation Sans">&amp;</text></svg>
<div class="t" style="left:93.9px;top:949.7px;font-size:11.4px;color:#e2e2e2;">EFS1 (Electrical engineering sch...</div>
<svg class="a" style="left:91.6px;top:965.1199999999999px" width="17" height="14"><path d="M1 1h11l4 3.5v8.5h-15z" fill="#2b2b2b" stroke="#f0f0f0" stroke-width="1.2"/><rect x="3" y="3.5" width="8" height="7" fill="#fff"/><rect x="4" y="4.5" width="6" height="5" fill="#e0202a"/></svg>
<div class="t" style="left:110.6px;top:966.5px;font-size:11.4px;color:#e2e2e2;">2 Sensor control</div>
<svg class="a" style="left:27.5px;top:984.9px" width="8" height="9"><path d="M1.5 1l5 3.5-5 3.5z" fill="#2b2b2b" stroke="#777"/></svg>
<svg class="a" style="left:41.5px;top:981.8599999999999px" width="16" height="15"><rect x="0.5" y="0.5" width="15" height="14" fill="#e6c040" stroke="#fff" stroke-dasharray="2 1.3"/><path d="M3 5.5h10 M3 9.5h10" stroke="#3a3020" stroke-width="1.6"/></svg>
<div class="t" style="left:60.5px;top:983.2px;font-size:11.4px;color:#e2e2e2;">HK1 (Paint workpiece)</div>
<div class="a" style="left:0px;top:1015px;width:276px;height:25px;background:#333333;"></div>
<div class="a" style="left:1px;top:1018px;width:33px;height:22px;background:#3b3b3b;border:1px solid #4a4a4a;border-bottom:none;box-sizing:border-box;"></div>
<div class="t" style="left:7px;top:1021.8px;font-size:12px;color:#e8e8e8;">Tree</div>
<div class="t" style="left:40px;top:1021.8px;font-size:12px;color:#e8e8e8;">List</div>
<div class="a" style="left:276px;top:158px;width:1374px;height:30px;background:#232323;"></div>
<div class="a" style="left:280px;top:158px;width:1370px;height:2px;background:#2b2b2b;"></div>
<div class="t" style="left:290px;top:165.2px;font-size:11.6px;color:#1ba1e2;font-weight:bold;">=GL1+A1&amp;EFS1/1</div>
<svg class="a" style="left:400px;top:165px" width="12" height="12"><path d="M2 2l8 8M10 2l-8 8" stroke="#ddd" stroke-width="1.5"/></svg>
<div class="a" style="left:284px;top:181px;width:129px;height:3px;background:#1b8ad0;"></div>
<div class="a" style="left:280px;top:184px;width:1144px;height:3px;background:#393939;"></div>
<svg class="a" style="left:1627px;top:162px" width="20" height="18"><rect x="0.5" y="0.5" width="19" height="17" fill="#2e2e2e" stroke="#3f3f3f"/><path d="M5 7h10l-5 5z" fill="#777"/></svg>
<div class="a" style="left:280px;top:187px;width:1144px;height:827px;background:#2b2b2b;"></div>
<div class="a" style="left:284px;top:188px;width:140px;height:825px;background:#fff;"></div>
<div class="a" style="left:283px;top:1014px;width:1365px;height:23px;background:#505050;"></div>
<div class="t" style="left:293px;top:1021.2px;font-size:10.4px;color:#e0e0e0;">RX: 0.27</div>
<div class="t" style="left:347px;top:1021.2px;font-size:10.4px;color:#e0e0e0;">RY: -1.07</div>
<svg class="a" style="left:1305px;top:1015px" width="120" height="22" fill="none">
<rect x="2" y="2" width="40" height="18" fill="#353535"/>
<path d="M9 14v-5a4 4 0 0 1 8 0v5" stroke="#eee" stroke-width="2.4"/><path d="M7 16l3-2" stroke="#1ba1e2" stroke-width="2"/>
<path d="M26 14v-5a4 4 0 0 1 8 0v5" stroke="#eee" stroke-width="2.4"/><path d="M25 17h9 M37 8v9" stroke="#eee" stroke-width="1.6" stroke-dasharray="1.5 1.5"/>
<circle cx="55" cy="10" r="5" stroke="#5a8db0" stroke-width="1.2" stroke-dasharray="2 1.5"/><path d="M55 4v12 M49 10h12" stroke="#8cc8ee" stroke-width="1.2"/>
<path d="M80 5h1M84 5h1M88 5h1M80 9h1M84 9h1M88 9h1M80 13h1M84 13h1M88 13h1" stroke="#ddd" stroke-width="2"/>
<path d="M101 10h5l-2.5 2.5z" fill="#777"/>
</svg>
<div class="t" style="left:1437px;top:1020.4px;font-size:11.3px;color:#e0e0e0;">Grid C: 4.00 mm</div>
<div class="t" style="left:1538px;top:1019.8px;font-size:12px;color:#e0e0e0;">Logic 1:1</div>
<svg class="a" style="left:1605px;top:1016px" width="45" height="20" fill="none" stroke="#ddd" stroke-width="1.4">
<circle cx="10" cy="8" r="6"/><path d="M14 12l5 5"/><path d="M7 13h7" stroke="#1ba1e2" stroke-width="2"/>
<circle cx="30" cy="8" r="6"/><path d="M34 12l5 5"/><path d="M27 13h7" stroke="#1ba1e2" stroke-width="2"/></svg>
<div class="a" style="left:0px;top:1037px;width:1890px;height:3px;background:#333333;"></div>
<div class="a" style="left:0px;top:1040px;width:1890px;height:23px;background:#545454;"></div>
<div class="t" style="left:8px;top:1045.8px;font-size:12px;color:#e8e8e8;">2 Sensor control</div>
<div class="t" style="left:1820px;top:1045.8px;font-size:12px;color:#e0e0e0;"># ~</div>
<svg class="a" style="left:1864px;top:1043px" width="20" height="18"><path d="M10 1l9 16h-18z" fill="#f0922b"/><path d="M10 6v6M10 14v2" stroke="#222" stroke-width="2"/></svg>
<div class="a" style="left:284px;top:188px;width:1140px;height:826px;background:#ffffff;"></div>
<div class="a" style="left:284px;top:188px;width:1140px;height:2px;background:#9a9a9a;"></div>
<div class="a" style="left:284px;top:188px;width:2px;height:826px;background:#9a9a9a;"></div>
<svg class="a" style="left:0;top:0" width="1890" height="1063" viewBox="0 0 1890 1063" font-family="Liberation Sans"><defs><clipPath id="cv"><rect x="284" y="188" width="1140" height="826"/></clipPath></defs><g clip-path="url(#cv)"><path d="M287.5 191V1011" stroke="#555" stroke-width="1.0" fill="none" /><path d="M296.5 191V950" stroke="#1e1e1e" stroke-width="1.0" fill="none" /><path d="M287 191.5H1421.5V993.5" stroke="#1e1e1e" stroke-width="1.2" fill="none" /><path d="M296 203.5H1421" stroke="#1e1e1e" stroke-width="1.2" fill="none" /><path d="M426.5 191V203" stroke="#1e1e1e" stroke-width="1.0" fill="none" /><path d="M534.5 191V203" stroke="#1e1e1e" stroke-width="1.0" fill="none" /><path d="M642.5 191V203" stroke="#1e1e1e" stroke-width="1.0" fill="none" /><path d="M750.5 191V203" stroke="#1e1e1e" stroke-width="1.0" fill="none" /><path d="M858.5 191V203" stroke="#1e1e1e" stroke-width="1.0" fill="none" /><path d="M966.5 191V203" stroke="#1e1e1e" stroke-width="1.0" fill="none" /><path d="M1074.5 191V203" stroke="#1e1e1e" stroke-width="1.0" fill="none" /><path d="M1182.5 191V203" stroke="#1e1e1e" stroke-width="1.0" fill="none" /><path d="M1290.5 191V203" stroke="#1e1e1e" stroke-width="1.0" fill="none" /><text x="361" y="200" font-size="5.5" fill="#333" text-anchor="middle" >0</text><text x="480" y="200" font-size="5.5" fill="#333" text-anchor="middle" >1</text><text x="588" y="200" font-size="5.5" fill="#333" text-anchor="middle" >2</text><text x="696" y="200" font-size="5.5" fill="#333" text-anchor="middle" >3</text><text x="804" y="200" font-size="5.5" fill="#333" text-anchor="middle" >4</text><text x="912" y="200" font-size="5.5" fill="#333" text-anchor="middle" >5</text><text x="1020" y="200" font-size="5.5" fill="#333" text-anchor="middle" >6</text><text x="1128" y="200" font-size="5.5" fill="#333" text-anchor="middle" >7</text><text x="1236" y="200" font-size="5.5" fill="#333" text-anchor="middle" >8</text><text x="1356" y="200" font-size="5.5" fill="#333" text-anchor="middle" >9</text><text transform="translate(294,946) rotate(-90)" font-size="6.05" fill="#555">Protected by copyright. Passing on as well as reproduction of this document, its utilization and communication of its contents are prohibited insofar as not expressly permitted.</text><path d="M420 225.2H437 M443 225.2H1299" stroke="#1e1e1e" stroke-width="1.3" fill="none" /><path d="M437 230.2l6 -5" stroke="#1e1e1e" stroke-width="1.3" fill="none" /><path d="M411 221.7l10 3.5-10 3.5z" fill="#ee1010"/><path d="M1299 221.7l10 3.5-10 3.5z" fill="#ee1010"/><text x="358" y="227.2" font-size="6" fill="#7c9e5c" text-anchor="end" >=GAB2+A2/ 1.9</text><text x="362" y="227.2" font-size="6" fill="#7c9e5c" text-anchor="start" >/</text><text x="370" y="228.2" font-size="8.7" fill="#2020d4" text-anchor="start" stroke="#2020d4" stroke-width="0.22" textLength="36.9" lengthAdjust="spacingAndGlyphs">=GAA-2L1</text><text x="1311" y="228.2" font-size="8.7" fill="#2020d4" text-anchor="start" stroke="#2020d4" stroke-width="0.22" textLength="36.9" lengthAdjust="spacingAndGlyphs">=GAA-2L1</text><text x="1350" y="227.2" font-size="6" fill="#7c9e5c" text-anchor="start" >/</text><text x="1358" y="227.2" font-size="6" fill="#7c9e5c" text-anchor="start" >=GL2/ 1.0</text><path d="M420 236H459 M465 236H1299" stroke="#1e1e1e" stroke-width="1.3" fill="none" /><path d="M459 241l6 -5" stroke="#1e1e1e" stroke-width="1.3" fill="none" /><path d="M411 232.5l10 3.5-10 3.5z" fill="#ee1010"/><path d="M1299 232.5l10 3.5-10 3.5z" fill="#ee1010"/><text x="358" y="238" font-size="6" fill="#7c9e5c" text-anchor="end" >=GAB2+A2/ 1.9</text><text x="362" y="238" font-size="6" fill="#7c9e5c" text-anchor="start" >/</text><text x="370" y="239" font-size="8.7" fill="#2020d4" text-anchor="start" stroke="#2020d4" stroke-width="0.22" textLength="36.9" lengthAdjust="spacingAndGlyphs">=GAA-2L2</text><text x="1311" y="239" font-size="8.7" fill="#2020d4" text-anchor="start" stroke="#2020d4" stroke-width="0.22" textLength="36.9" lengthAdjust="spacingAndGlyphs">=GAA-2L2</text><text x="1350" y="238" font-size="6" fill="#7c9e5c" text-anchor="start" >/</text><text x="1358" y="238" font-size="6" fill="#7c9e5c" text-anchor="start" >=GL2/ 1.0</text><path d="M420 246.8H480 M486 246.8H1299" stroke="#1e1e1e" stroke-width="1.3" fill="none" /><path d="M480 251.8l6 -5" stroke="#1e1e1e" stroke-width="1.3" fill="none" /><path d="M411 243.3l10 3.5-10 3.5z" fill="#ee1010"/><path d="M1299 243.3l10 3.5-10 3.5z" fill="#ee1010"/><text x="358" y="248.8" font-size="6" fill="#7c9e5c" text-anchor="end" >=GAB2+A2/ 1.9</text><text x="362" y="248.8" font-size="6" fill="#7c9e5c" text-anchor="start" >/</text><text x="370" y="249.8" font-size="8.7" fill="#2020d4" text-anchor="start" stroke="#2020d4" stroke-width="0.22" textLength="36.9" lengthAdjust="spacingAndGlyphs">=GAA-2L3</text><text x="1311" y="249.8" font-size="8.7" fill="#2020d4" text-anchor="start" stroke="#2020d4" stroke-width="0.22" textLength="36.9" lengthAdjust="spacingAndGlyphs">=GAA-2L3</text><text x="1350" y="248.8" font-size="6" fill="#7c9e5c" text-anchor="start" >/</text><text x="1358" y="248.8" font-size="6" fill="#7c9e5c" text-anchor="start" >=GL2/ 1.0</text><path d="M899 221.5l6 7" stroke="#c8182e" stroke-width="1.2" fill="none" /><text x="905" y="214.0" font-size="4.3" fill="#d01c34" text-anchor="start" >BK</text><text x="905" y="219.3" font-size="4.3" fill="#d01c34" text-anchor="start" >0.471 m</text><text x="905" y="224.6" font-size="4.3" fill="#d01c34" text-anchor="start" >4</text><path d="M910 232.5l6 7" stroke="#c8182e" stroke-width="1.2" fill="none" /><text x="916" y="225.0" font-size="4.3" fill="#d01c34" text-anchor="start" >BK</text><text x="916" y="230.3" font-size="4.3" fill="#d01c34" text-anchor="start" >0.471 m</text><text x="916" y="235.6" font-size="4.3" fill="#d01c34" text-anchor="start" >4</text><path d="M921 243.5l6 7" stroke="#c8182e" stroke-width="1.2" fill="none" /><text x="927" y="236.0" font-size="4.3" fill="#d01c34" text-anchor="start" >BK</text><text x="927" y="241.3" font-size="4.3" fill="#d01c34" text-anchor="start" >0.471 m</text><text x="927" y="246.6" font-size="4.3" fill="#d01c34" text-anchor="start" >4</text><path d="M437 230V303 M437 365V462 M437 487V815" stroke="#1e1e1e" stroke-width="1.3" fill="none" /><path d="M459 241V303 M459 365V462 M459 487V815" stroke="#1e1e1e" stroke-width="1.3" fill="none" /><path d="M480 252V303 M480 365V462 M480 487V815" stroke="#1e1e1e" stroke-width="1.3" fill="none" /><rect x="385" y="317.5" width="17" height="9.5" fill="#fff" stroke="#1a80b8" stroke-width="2.2"/><text x="393.5" y="325.5" font-size="8.5" fill="#1a80b8" text-anchor="middle" font-weight="bold" letter-spacing="-0.5">-FC1</text><rect x="357" y="327.5" width="45" height="8" fill="#1a80b8"/><text x="379.5" y="334" font-size="5.2" fill="#e8f4fa" text-anchor="middle" >1,4...2A, N: 26A</text><rect x="409.5" y="317" width="11" height="11" fill="none" stroke="#1a80b8" stroke-width="2"/><path d="M409 322.5h12 M415 315v15 M403 322.5h6 M403 319v7" stroke="#1a80b8" stroke-width="2" fill="none" /><path d="M421 322.8H548" stroke="#1a80b8" stroke-width="2.2" fill="none" stroke-dasharray="5 3.5"/><rect x="427" y="303" width="10" height="13.5" fill="#1a80b8"/><text transform="translate(432,309.5) rotate(-90)" font-size="5" fill="#dff0f8" text-anchor="middle">1/L1</text><rect x="427" y="351.5" width="10" height="14" fill="#1a80b8"/><text transform="translate(432,358.5) rotate(-90)" font-size="5" fill="#dff0f8" text-anchor="middle">2/T1</text><path d="M430 316.5L437.5 329.5" stroke="#1a80b8" stroke-width="2.2" fill="none" /><rect x="449" y="303" width="10" height="13.5" fill="#1a80b8"/><text transform="translate(454,309.5) rotate(-90)" font-size="5" fill="#dff0f8" text-anchor="middle">3/L2</text><rect x="449" y="351.5" width="10" height="14" fill="#1a80b8"/><text transform="translate(454,358.5) rotate(-90)" font-size="5" fill="#dff0f8" text-anchor="middle">4/T2</text><path d="M452 316.5L459.5 329.5" stroke="#1a80b8" stroke-width="2.2" fill="none" /><rect x="470" y="303" width="10" height="13.5" fill="#1a80b8"/><text transform="translate(475,309.5) rotate(-90)" font-size="5" fill="#dff0f8" text-anchor="middle">5/L3</text><rect x="470" y="351.5" width="10" height="14" fill="#1a80b8"/><text transform="translate(475,358.5) rotate(-90)" font-size="5" fill="#dff0f8" text-anchor="middle">6/T3</text><path d="M473 316.5L480.5 329.5" stroke="#1a80b8" stroke-width="2.2" fill="none" /><rect x="426.5" y="329" width="64" height="21" fill="none" stroke="#1a80b8" stroke-width="2.4"/><path d="M426 339.5h65 M448 329v21 M469.5 329v21" stroke="#1a80b8" stroke-width="2.4" fill="none" /><path d="M429 335h5v-3h5v5 M431 342l6 3-6 3" stroke="#1a80b8" stroke-width="1.8" fill="none" /><path d="M451 335h5v-3h5v5 M453 342l6 3-6 3" stroke="#1a80b8" stroke-width="1.8" fill="none" /><path d="M472 335h5v-3h5v5 M474 342l6 3-6 3" stroke="#1a80b8" stroke-width="1.8" fill="none" /><path d="M415.5 334.5v11h10 M415.5 334.5h10" stroke="#1a80b8" stroke-width="1.8" fill="none" stroke-dasharray="3 2"/><rect x="499" y="307" width="9" height="8" fill="#1a80b8"/><rect x="513.5" y="308" width="9" height="8" fill="#1a80b8"/><rect x="499" y="329.5" width="9" height="7" fill="#1a80b8"/><rect x="513.5" y="329.5" width="9" height="7" fill="#1a80b8"/><rect x="499" y="339" width="9" height="13" fill="#1a80b8"/><path d="M500 316l7.5 13 M523 316l-9 13 M523 316l5 0" stroke="#1a80b8" stroke-width="2" fill="none" /><path d="M434 384.5l6 7" stroke="#c8182e" stroke-width="1.2" fill="none" /><text x="441" y="376.0" font-size="4.3" fill="#d01c34" text-anchor="start" >BK</text><text x="441" y="381.3" font-size="4.3" fill="#d01c34" text-anchor="start" >0.785 m</text><text x="441" y="386.6" font-size="4.3" fill="#d01c34" text-anchor="start" >2,5</text><path d="M456 384.5l6 7" stroke="#c8182e" stroke-width="1.2" fill="none" /><text x="463" y="376.0" font-size="4.3" fill="#d01c34" text-anchor="start" >BK</text><text x="463" y="381.3" font-size="4.3" fill="#d01c34" text-anchor="start" >0.785 m</text><text x="463" y="386.6" font-size="4.3" fill="#d01c34" text-anchor="start" >2,5</text><path d="M477 384.5l6 7" stroke="#c8182e" stroke-width="1.2" fill="none" /><text x="484" y="376.0" font-size="4.3" fill="#d01c34" text-anchor="start" >BK</text><text x="484" y="381.3" font-size="4.3" fill="#d01c34" text-anchor="start" >0.785 m</text><text x="484" y="386.6" font-size="4.3" fill="#d01c34" text-anchor="start" >2,5</text><path d="M442 409.5H588.5V539.5H485.5 M464 420.5H566.5V528.5H464 M485 431.5H545.5V517.5H442" stroke="#1e1e1e" stroke-width="1.3" fill="none" /><path d="M437 414.5l5 -5" stroke="#1e1e1e" stroke-width="1.3" fill="none" /><path d="M459 425.5l5 -5" stroke="#1e1e1e" stroke-width="1.3" fill="none" /><path d="M480 436.5l5 -5" stroke="#1e1e1e" stroke-width="1.3" fill="none" /><path d="M437 512.5l5 5" stroke="#1e1e1e" stroke-width="1.3" fill="none" /><path d="M459 523.5l5 5" stroke="#1e1e1e" stroke-width="1.3" fill="none" /><path d="M480 534.5l5 5" stroke="#1e1e1e" stroke-width="1.3" fill="none" /><path d="M510 406.0l6 7" stroke="#c8182e" stroke-width="1.2" fill="none" /><path d="M510 417.0l6 7" stroke="#c8182e" stroke-width="1.2" fill="none" /><path d="M510 428.0l6 7" stroke="#c8182e" stroke-width="1.2" fill="none" /><path d="M510 514.0l6 7" stroke="#c8182e" stroke-width="1.2" fill="none" /><path d="M510 525.0l6 7" stroke="#c8182e" stroke-width="1.2" fill="none" /><path d="M510 536.0l6 7" stroke="#c8182e" stroke-width="1.2" fill="none" /><text x="517" y="396.0" font-size="4.3" fill="#d01c34" text-anchor="start" >BK</text><text x="517" y="401.3" font-size="4.3" fill="#d01c34" text-anchor="start" >0.493 m</text><text x="517" y="406.6" font-size="4.3" fill="#d01c34" text-anchor="start" >BK</text><text x="517" y="411.9" font-size="4.3" fill="#d01c34" text-anchor="start" >0.439 m</text><text x="517" y="417.2" font-size="4.3" fill="#d01c34" text-anchor="start" >BK</text><text x="517" y="422.5" font-size="4.3" fill="#d01c34" text-anchor="start" >0.451 m</text><text x="517" y="427.8" font-size="4.3" fill="#d01c34" text-anchor="start" >2,5</text><text x="517" y="504.0" font-size="4.3" fill="#d01c34" text-anchor="start" >BK</text><text x="517" y="509.3" font-size="4.3" fill="#d01c34" text-anchor="start" >0.487 m</text><text x="517" y="514.6" font-size="4.3" fill="#d01c34" text-anchor="start" >BK</text><text x="517" y="519.9" font-size="4.3" fill="#d01c34" text-anchor="start" >0.422 m</text><text x="517" y="525.2" font-size="4.3" fill="#d01c34" text-anchor="start" >BK</text><text x="517" y="530.5" font-size="4.3" fill="#d01c34" text-anchor="start" >0.422 m</text><text x="517" y="535.8" font-size="4.3" fill="#d01c34" text-anchor="start" >2,5</text><path d="M437 462v3a2 2 0 0 1 -3 2" stroke="#2020d4" stroke-width="1.3" fill="none"/><path d="M430.5 467.5L437 479V487" stroke="#2020d4" stroke-width="1.3" fill="none" /><path d="M459 462v3a2 2 0 0 1 -3 2" stroke="#2020d4" stroke-width="1.3" fill="none"/><path d="M452.5 467.5L459 479V487" stroke="#2020d4" stroke-width="1.3" fill="none" /><path d="M480 462v3a2 2 0 0 1 -3 2" stroke="#2020d4" stroke-width="1.3" fill="none"/><path d="M473.5 467.5L480 479V487" stroke="#2020d4" stroke-width="1.3" fill="none" /><path d="M545 462v3a2 2 0 0 1 -3 2" stroke="#2020d4" stroke-width="1.3" fill="none"/><path d="M538.5 467.5L545 479V487" stroke="#2020d4" stroke-width="1.3" fill="none" /><path d="M567 462v3a2 2 0 0 1 -3 2" stroke="#2020d4" stroke-width="1.3" fill="none"/><path d="M560.5 467.5L567 479V487" stroke="#2020d4" stroke-width="1.3" fill="none" /><path d="M588 462v3a2 2 0 0 1 -3 2" stroke="#2020d4" stroke-width="1.3" fill="none"/><path d="M581.5 467.5L588 479V487" stroke="#2020d4" stroke-width="1.3" fill="none" /><path d="M545 431V462 M545 487V517 M567 420V462 M567 487V528 M588 409V462 M588 487V539" stroke="#1e1e1e" stroke-width="1.3" fill="none" /><text x="427" y="477.5" font-size="8.7" fill="#2020d4" text-anchor="end" stroke="#2020d4" stroke-width="0.22" textLength="18.7" lengthAdjust="spacingAndGlyphs">-QA1</text><text x="426" y="485" font-size="6" fill="#7c9e5c" text-anchor="end" >/ 1.7</text><text x="535" y="477.5" font-size="8.7" fill="#2020d4" text-anchor="end" stroke="#2020d4" stroke-width="0.22" textLength="18.7" lengthAdjust="spacingAndGlyphs">-QA2</text><text x="534" y="485" font-size="6" fill="#7c9e5c" text-anchor="end" >/ 1.9</text><text transform="translate(432,457) rotate(-90)" font-size="5.5" fill="#333" text-anchor="middle">1/L1</text><text transform="translate(432,490) rotate(-90)" font-size="5.5" fill="#333" text-anchor="middle">2/T1</text><text transform="translate(454,457) rotate(-90)" font-size="5.5" fill="#333" text-anchor="middle">3/L2</text><text transform="translate(454,490) rotate(-90)" font-size="5.5" fill="#333" text-anchor="middle">4/T2</text><text transform="translate(475,457) rotate(-90)" font-size="5.5" fill="#333" text-anchor="middle">5/L3</text><text transform="translate(475,490) rotate(-90)" font-size="5.5" fill="#333" text-anchor="middle">6/T3</text><text transform="translate(540,457) rotate(-90)" font-size="5.5" fill="#333" text-anchor="middle">1/L1</text><text transform="translate(540,490) rotate(-90)" font-size="5.5" fill="#333" text-anchor="middle">2/T1</text><text transform="translate(562,457) rotate(-90)" font-size="5.5" fill="#333" text-anchor="middle">3/L2</text><text transform="translate(562,490) rotate(-90)" font-size="5.5" fill="#333" text-anchor="middle">4/T2</text><text transform="translate(583,457) rotate(-90)" font-size="5.5" fill="#333" text-anchor="middle">5/L3</text><text transform="translate(583,490) rotate(-90)" font-size="5.5" fill="#333" text-anchor="middle">6/T3</text><path d="M434 557.0l6 7" stroke="#c8182e" stroke-width="1.2" fill="none" /><text x="441" y="549.0" font-size="4.3" fill="#d01c34" text-anchor="start" >BK</text><text x="441" y="554.3" font-size="4.3" fill="#d01c34" text-anchor="start" >1.2xx m</text><text x="441" y="559.6" font-size="4.3" fill="#d01c34" text-anchor="start" >2,5</text><path d="M456 557.0l6 7" stroke="#c8182e" stroke-width="1.2" fill="none" /><text x="463" y="549.0" font-size="4.3" fill="#d01c34" text-anchor="start" >BK</text><text x="463" y="554.3" font-size="4.3" fill="#d01c34" text-anchor="start" >1.2xx m</text><text x="463" y="559.6" font-size="4.3" fill="#d01c34" text-anchor="start" >2,5</text><path d="M477 557.0l6 7" stroke="#c8182e" stroke-width="1.2" fill="none" /><text x="484" y="549.0" font-size="4.3" fill="#d01c34" text-anchor="start" >BK</text><text x="484" y="554.3" font-size="4.3" fill="#d01c34" text-anchor="start" >1.2xx m</text><text x="484" y="559.6" font-size="4.3" fill="#d01c34" text-anchor="start" >2,5</text><text x="427" y="650" font-size="8.7" fill="#2020d4" text-anchor="end" stroke="#2020d4" stroke-width="0.22" textLength="18.3" lengthAdjust="spacingAndGlyphs">-XD4</text><circle cx="437" cy="647" r="2.5" fill="#fff" stroke="#2020d4" stroke-width="1.2"/><path d="M431 647h3.5" stroke="#2020d4" stroke-width="0.9" fill="none" /><circle cx="459" cy="647" r="2.5" fill="#fff" stroke="#2020d4" stroke-width="1.2"/><path d="M453 647h3.5" stroke="#2020d4" stroke-width="0.9" fill="none" /><circle cx="480" cy="647" r="2.5" fill="#fff" stroke="#2020d4" stroke-width="1.2"/><path d="M474 647h3.5" stroke="#2020d4" stroke-width="0.9" fill="none" /><circle cx="502" cy="647" r="2.5" fill="#fff" stroke="#2020d4" stroke-width="1.2"/><path d="M496 647h3.5" stroke="#2020d4" stroke-width="0.9" fill="none" /><circle cx="524" cy="647" r="2.5" fill="#fff" stroke="#2020d4" stroke-width="1.2"/><path d="M518 647h3.5" stroke="#2020d4" stroke-width="0.9" fill="none" /><circle cx="531" cy="647" r="4.2" fill="#555" stroke="#222" stroke-width="0.8"/><path d="M528.4 647.5h5.2M529.4 649h3.2M531 644v3.5" stroke="#fff" stroke-width="0.8"/><path d="M502 650V766" stroke="#e63232" stroke-width="1.4" fill="none" /><path d="M524 650V755H502V800" stroke="#30d030" stroke-width="1.5" fill="none" /><path d="M566 841V625.5H761V766 M588 841V636.5H729V766 M566 841H588" stroke="#e63232" stroke-width="1.5" fill="none" /><path d="M610 725V776.5H600" stroke="#e63232" stroke-width="1.4" fill="none" /><rect x="556" y="771" width="44" height="12" rx="6" fill="none" stroke="#3a3ad8" stroke-width="1.2" stroke-dasharray="3 2"/><path d="M350 852.5V676H364V657.5H653.5V852.5Z" stroke="#3a9e9e" stroke-width="1.3" fill="none" stroke-dasharray="6 3"/><path d="M372 788.5V687H385V669.5H643V788.5Z" stroke="#3a9e9e" stroke-width="1.3" fill="none" stroke-dasharray="6 3"/><path d="M664 852.5V703H677V657.5H838V852.5Z" stroke="#3a9e9e" stroke-width="1.3" fill="none" stroke-dasharray="6 3"/><text transform="translate(361,669) rotate(-90)" font-size="8.2" fill="#2020d4" text-anchor="middle">+B1</text><text transform="translate(383,678) rotate(-90)" font-size="8.2" fill="#2020d4" text-anchor="middle">+X1</text><text transform="translate(676,681) rotate(-90)" font-size="8.2" fill="#2020d4" text-anchor="middle">=K1+B1.X1</text><text x="426" y="699" font-size="8.7" fill="#2020d4" text-anchor="end" stroke="#2020d4" stroke-width="0.22" textLength="20.5" lengthAdjust="spacingAndGlyphs">-WD2</text><text x="426" y="706" font-size="4.8" fill="#2020d4" text-anchor="end" >5G2,5</text><path d="M428 701.5H535" stroke="#3434e0" stroke-width="1.6" fill="none" /><path d="M434 698.0l6 7" stroke="#c8182e" stroke-width="1.2" fill="none" /><text x="440" y="699.0" font-size="4.3" fill="#d01c34" text-anchor="start" >BK</text><path d="M456 698.0l6 7" stroke="#c8182e" stroke-width="1.2" fill="none" /><text x="462" y="699.0" font-size="4.3" fill="#d01c34" text-anchor="start" >BK</text><path d="M477 698.0l6 7" stroke="#c8182e" stroke-width="1.2" fill="none" /><text x="483" y="699.0" font-size="4.3" fill="#d01c34" text-anchor="start" >BK</text><path d="M499 698.0l6 7" stroke="#c8182e" stroke-width="1.2" fill="none" /><text x="505" y="699.0" font-size="4.3" fill="#d01c34" text-anchor="start" >BK</text><path d="M521 698.0l6 7" stroke="#c8182e" stroke-width="1.2" fill="none" /><text x="527" y="699.0" font-size="4.3" fill="#d01c34" text-anchor="start" >BK</text><text x="427" y="725.5" font-size="8.7" fill="#2020d4" text-anchor="end" stroke="#2020d4" stroke-width="0.22" textLength="17.4" lengthAdjust="spacingAndGlyphs">-XZ1</text><circle cx="437" cy="722.5" r="2.5" fill="#fff" stroke="#2020d4" stroke-width="1.2"/><path d="M431 722.5h3.5" stroke="#2020d4" stroke-width="0.9" fill="none" /><circle cx="459" cy="722.5" r="2.5" fill="#fff" stroke="#2020d4" stroke-width="1.2"/><path d="M453 722.5h3.5" stroke="#2020d4" stroke-width="0.9" fill="none" /><circle cx="480" cy="722.5" r="2.5" fill="#fff" stroke="#2020d4" stroke-width="1.2"/><path d="M474 722.5h3.5" stroke="#2020d4" stroke-width="0.9" fill="none" /><circle cx="502" cy="722.5" r="2.5" fill="#fff" stroke="#2020d4" stroke-width="1.2"/><path d="M496 722.5h3.5" stroke="#2020d4" stroke-width="0.9" fill="none" /><circle cx="524" cy="722.5" r="2.5" fill="#fff" stroke="#2020d4" stroke-width="1.2"/><path d="M518 722.5h3.5" stroke="#2020d4" stroke-width="0.9" fill="none" /><circle cx="566" cy="722.5" r="2.5" fill="#fff" stroke="#2020d4" stroke-width="1.2"/><path d="M560 722.5h3.5" stroke="#2020d4" stroke-width="0.9" fill="none" /><circle cx="588" cy="722.5" r="2.5" fill="#fff" stroke="#2020d4" stroke-width="1.2"/><path d="M582 722.5h3.5" stroke="#2020d4" stroke-width="0.9" fill="none" /><circle cx="610" cy="722.5" r="2.5" fill="#fff" stroke="#2020d4" stroke-width="1.2"/><path d="M604 722.5h3.5" stroke="#2020d4" stroke-width="0.9" fill="none" /><circle cx="531" cy="722.5" r="4.2" fill="#555" stroke="#222" stroke-width="0.8"/><path d="M528.4 723.0h5.2M529.4 724.5h3.2M531 719.5v3.5" stroke="#fff" stroke-width="0.8"/><text x="426" y="764.5" font-size="8.7" fill="#2020d4" text-anchor="end" stroke="#2020d4" stroke-width="0.22" textLength="19.6" lengthAdjust="spacingAndGlyphs">-WZ1</text><text x="426" y="772.3" font-size="5.2" fill="#2020d4" text-anchor="end" >4G2,5+(2x0,75)</text><text x="426" y="779" font-size="6" fill="#7c9e5c" text-anchor="end" >/ 1.2</text><path d="M428 766.5H620" stroke="#3434e0" stroke-width="1.6" fill="none" /><path d="M434 763.0l6 7" stroke="#c8182e" stroke-width="1.2" fill="none" /><path d="M456 763.0l6 7" stroke="#c8182e" stroke-width="1.2" fill="none" /><path d="M477 763.0l6 7" stroke="#c8182e" stroke-width="1.2" fill="none" /><path d="M499 763.0l6 7" stroke="#c8182e" stroke-width="1.2" fill="none" /><path d="M563 763.0l6 7" stroke="#c8182e" stroke-width="1.2" fill="none" /><path d="M585 763.0l6 7" stroke="#c8182e" stroke-width="1.2" fill="none" /><path d="M607 763.0l6 7" stroke="#c8182e" stroke-width="1.2" fill="none" /><path d="M437 800V815l7 7 M459 800V815 M480 800V815l-7 7" stroke="#2020d4" stroke-width="1.4" fill="none" /><text transform="translate(433,808) rotate(-90)" font-size="5.5" fill="#333" text-anchor="middle">U1</text><text transform="translate(455,808) rotate(-90)" font-size="5.5" fill="#333" text-anchor="middle">V1</text><text transform="translate(476,808) rotate(-90)" font-size="5.5" fill="#333" text-anchor="middle">W1</text><text transform="translate(498,790) rotate(-90)" font-size="5.5" fill="#333" text-anchor="middle">PE</text><circle cx="458.3" cy="830.8" r="15.6" fill="#fff" stroke="#2020d4" stroke-width="1.6"/><text x="458.3" y="830" font-size="7.5" fill="#2020d4" text-anchor="middle" >M</text><text x="458.3" y="840" font-size="7.5" fill="#2020d4" text-anchor="middle" >3 ~</text><path d="M477 831H502V800" stroke="#2020d4" stroke-width="1.5" fill="none" /><path d="M476 826v10" stroke="#2020d4" stroke-width="2.2" fill="none" /><circle cx="510" cy="808" r="4.2" fill="#555" stroke="#222" stroke-width="0.8"/><path d="M507.4 808.5h5.2M508.4 810h3.2M510 805v3.5" stroke="#fff" stroke-width="0.8"/><text x="426" y="834" font-size="8.7" fill="#2020d4" text-anchor="end" stroke="#2020d4" stroke-width="0.22" textLength="19.2" lengthAdjust="spacingAndGlyphs">-MA1</text><text x="426" y="842" font-size="5.6" fill="#333" text-anchor="end" >0,55 kW</text><rect x="545" y="825.5" width="10" height="11" fill="none" stroke="#2020d4" stroke-width="1.3"/><path d="M548 831h4 M556 831h4" stroke="#2020d4" stroke-width="1.1" fill="none" stroke-dasharray="2 1"/><path d="M566 818v4 M566 841v-3 M566 838l3 -13h2" stroke="#2020d4" stroke-width="1.3" fill="none" /><text transform="translate(562,820) rotate(-90)" font-size="5.5" fill="#333" text-anchor="middle">11</text><text transform="translate(562,840) rotate(-90)" font-size="5.5" fill="#333" text-anchor="middle">12</text><rect x="707.5" y="766" width="108" height="76" fill="#fff" stroke="#2020d4" stroke-width="1.6"/><path d="M708 777H815" stroke="#2020d4" stroke-width="1.4" fill="none" /><path d="M708 788H815" stroke="#2020d4" stroke-width="1.4" fill="none" /><path d="M708 799H815" stroke="#2020d4" stroke-width="1.4" fill="none" /><path d="M708 810H815" stroke="#2020d4" stroke-width="1.4" fill="none" /><path d="M708 821H815" stroke="#2020d4" stroke-width="1.4" fill="none" /><rect x="726.8" y="761" width="4.4" height="5" fill="#2020d4"/><path d="M724.5 762a4.5 4.5 0 0 1 9 0" stroke="#2020d4" stroke-width="1.4" fill="none"/><text x="729" y="773" font-size="5.8" fill="#333" text-anchor="middle" >IN1</text><text x="723" y="764" font-size="4.5" fill="#333" text-anchor="end" >3</text><text transform="translate(725,753) rotate(-90)" font-size="5.5" fill="#333" text-anchor="middle">1.1</text><rect x="758.8" y="761" width="4.4" height="5" fill="#2020d4"/><path d="M756.5 762a4.5 4.5 0 0 1 9 0" stroke="#2020d4" stroke-width="1.4" fill="none"/><text x="761" y="773" font-size="5.8" fill="#333" text-anchor="middle" >LIM</text><text x="755" y="764" font-size="4.5" fill="#333" text-anchor="end" >3</text><text transform="translate(757,753) rotate(-90)" font-size="5.5" fill="#333" text-anchor="middle">1.2</text><rect x="790.8" y="761" width="4.4" height="5" fill="#2020d4"/><path d="M788.5 762a4.5 4.5 0 0 1 9 0" stroke="#2020d4" stroke-width="1.4" fill="none"/><text x="793" y="773" font-size="5.8" fill="#333" text-anchor="middle" >GND</text><text x="787" y="764" font-size="4.5" fill="#333" text-anchor="end" >3</text><text transform="translate(789,753) rotate(-90)" font-size="5.5" fill="#333" text-anchor="middle">1.3</text><text x="761" y="784" font-size="5.8" fill="#333" text-anchor="middle" >-KE1</text><text x="761" y="795" font-size="5.8" fill="#333" text-anchor="middle" >=K1+B1.X1&amp;EFA1/ 1.5</text><text x="761" y="806" font-size="5.8" fill="#333" text-anchor="middle" >%IX7.0</text><text x="761" y="817" font-size="5.8" fill="#333" text-anchor="middle" >+B1-MA1:12</text><text x="761" y="826.5" font-size="5.8" fill="#333" text-anchor="middle" >Excess temperature "Feed"</text><path d="M726 738.5l6 7" stroke="#c8182e" stroke-width="1.2" fill="none" /><text x="733" y="737.0" font-size="4.3" fill="#d01c34" text-anchor="start" >GY</text><text x="733" y="742.3" font-size="4.3" fill="#d01c34" text-anchor="start" >0,75</text><path d="M758 738.5l6 7" stroke="#c8182e" stroke-width="1.2" fill="none" /><text x="765" y="737.0" font-size="4.3" fill="#d01c34" text-anchor="start" >GY</text><text x="765" y="742.3" font-size="4.3" fill="#d01c34" text-anchor="start" >0,75</text><text x="437" y="864" font-size="8.4" fill="#222" text-anchor="start" letter-spacing="-0.3">Drive "Feed"</text><text x="729" y="864" font-size="8.4" fill="#222" text-anchor="start" letter-spacing="-0.3">Excess temperature</text><text x="729" y="873" font-size="8.4" fill="#222" text-anchor="start" >"Feed"</text><text x="427" y="884" font-size="5" fill="#333" text-anchor="end" >11</text><path d="M430 882h4l5-4 M436 882h8" stroke="#2020d4" stroke-width="1.1" fill="none" /><text x="448" y="884" font-size="5" fill="#333" text-anchor="start" >12</text><text x="467" y="884" font-size="6" fill="#7c9e5c" text-anchor="end" >/ 1.2</text><rect x="432.5" y="887.5" width="8" height="8" fill="none" stroke="#2020d4" stroke-width="1.2"/><path d="M436.5 882v5" stroke="#2020d4" stroke-width="1" fill="none" stroke-dasharray="1 1"/><text x="300" y="947.5" font-size="8.5" fill="#222" text-anchor="start" letter-spacing="-0.3">=S2+C2/1</text><path d="M934.5 311V279.5H967V841 M934.5 333V841" stroke="#e63232" stroke-width="1.5" fill="none" /><path d="M934.5 311v5.5 M928.5 316.5L934.5 332.7" stroke="#2020d4" stroke-width="1.3" fill="none" /><text x="924" y="326" font-size="8.7" fill="#2020d4" text-anchor="end" stroke="#2020d4" stroke-width="0.22" textLength="17.9" lengthAdjust="spacingAndGlyphs">-FC1</text><text x="923" y="333.8" font-size="6" fill="#7c9e5c" text-anchor="end" >/ 1.1</text><text transform="translate(930,312) rotate(-90)" font-size="5.5" fill="#333" text-anchor="middle">13</text><text transform="translate(930,334) rotate(-90)" font-size="5.5" fill="#333" text-anchor="middle">14</text><path d="M931.5 384.5l6 7" stroke="#c8182e" stroke-width="1.2" fill="none" /><text x="938.5" y="375.0" font-size="4.3" fill="#d01c34" text-anchor="start" >GY</text><text x="938.5" y="380.3" font-size="4.3" fill="#d01c34" text-anchor="start" >2.839 m</text><text x="938.5" y="385.6" font-size="4.3" fill="#d01c34" text-anchor="start" >0,75</text><circle cx="934.5" cy="419.5" r="2.5" fill="#fff" stroke="#2020d4" stroke-width="1.2"/><path d="M928.5 419.5h3.5" stroke="#2020d4" stroke-width="0.9" fill="none" /><circle cx="934.5" cy="485" r="2.5" fill="#fff" stroke="#2020d4" stroke-width="1.2"/><path d="M928.5 485h3.5" stroke="#2020d4" stroke-width="0.9" fill="none" /><path d="M931.5 459.5l6 7" stroke="#c8182e" stroke-width="1.2" fill="none" /><path d="M931.5 693.5l6 7" stroke="#c8182e" stroke-width="1.2" fill="none" /><text x="938.5" y="686.0" font-size="4.3" fill="#d01c34" text-anchor="start" >GY</text><text x="938.5" y="691.3" font-size="4.3" fill="#d01c34" text-anchor="start" >0,75</text><path d="M931.5 734.5l6 7" stroke="#c8182e" stroke-width="1.2" fill="none" /><path d="M964 384.5l6 7" stroke="#c8182e" stroke-width="1.2" fill="none" /><text x="971" y="375.0" font-size="4.3" fill="#d01c34" text-anchor="start" >GY</text><text x="971" y="380.3" font-size="4.3" fill="#d01c34" text-anchor="start" >2.839 m</text><text x="971" y="385.6" font-size="4.3" fill="#d01c34" text-anchor="start" >0,75</text><circle cx="967" cy="419.5" r="2.5" fill="#fff" stroke="#2020d4" stroke-width="1.2"/><path d="M961 419.5h3.5" stroke="#2020d4" stroke-width="0.9" fill="none" /><circle cx="967" cy="485" r="2.5" fill="#fff" stroke="#2020d4" stroke-width="1.2"/><path d="M961 485h3.5" stroke="#2020d4" stroke-width="0.9" fill="none" /><path d="M964 459.5l6 7" stroke="#c8182e" stroke-width="1.2" fill="none" /><path d="M964 693.5l6 7" stroke="#c8182e" stroke-width="1.2" fill="none" /><text x="971" y="686.0" font-size="4.3" fill="#d01c34" text-anchor="start" >GY</text><text x="971" y="691.3" font-size="4.3" fill="#d01c34" text-anchor="start" >0,75</text><path d="M964 734.5l6 7" stroke="#c8182e" stroke-width="1.2" fill="none" /><text x="924" y="422.5" font-size="8.7" fill="#2020d4" text-anchor="end" stroke="#2020d4" stroke-width="0.22" textLength="18.7" lengthAdjust="spacingAndGlyphs">-XG1</text><text x="924" y="488" font-size="8.7" fill="#2020d4" text-anchor="end" stroke="#2020d4" stroke-width="0.22" textLength="18.7" lengthAdjust="spacingAndGlyphs">-XG1</text><text x="924" y="461.5" font-size="8.7" fill="#2020d4" text-anchor="end" stroke="#2020d4" stroke-width="0.22" textLength="21.0" lengthAdjust="spacingAndGlyphs">-WG1</text><text x="924" y="468" font-size="5.2" fill="#2020d4" text-anchor="end" >4G0,75</text><text x="924" y="475.5" font-size="6" fill="#7c9e5c" text-anchor="end" >=GAB2+A2/ 1.6</text><path d="M924 463H978" stroke="#3434e0" stroke-width="1.5" fill="none" /><text x="940" y="461.0" font-size="4.3" fill="#d01c34" text-anchor="start" >BU</text><text x="972" y="461.0" font-size="4.3" fill="#d01c34" text-anchor="start" >BN</text><path d="M859 852.5V474.5H872V442H1031.5V852.5Z" stroke="#3a9e9e" stroke-width="1.3" fill="none" stroke-dasharray="6 3"/><text transform="translate(868,459) rotate(-90)" font-size="8.2" fill="#2020d4" text-anchor="middle">=K1+A2</text><text x="925" y="725.5" font-size="8.7" fill="#2020d4" text-anchor="end" stroke="#2020d4" stroke-width="0.22" textLength="18.7" lengthAdjust="spacingAndGlyphs">-XG5</text><path d="M998 722V766" stroke="#e63232" stroke-width="1.5" fill="none" /><circle cx="934.5" cy="722.5" r="2.5" fill="#fff" stroke="#2020d4" stroke-width="1.2"/><path d="M928.5 722.5h3.5" stroke="#2020d4" stroke-width="0.9" fill="none" /><rect x="932.3" y="761" width="4.4" height="5" fill="#2020d4"/><path d="M930.0 762a4.5 4.5 0 0 1 9 0" stroke="#2020d4" stroke-width="1.4" fill="none"/><text transform="translate(930.5,753) rotate(-90)" font-size="5.5" fill="#333" text-anchor="middle">1.4</text><text x="928.5" y="764" font-size="4.5" fill="#333" text-anchor="end" >1</text><circle cx="967" cy="722.5" r="2.5" fill="#fff" stroke="#2020d4" stroke-width="1.2"/><path d="M961 722.5h3.5" stroke="#2020d4" stroke-width="0.9" fill="none" /><rect x="964.8" y="761" width="4.4" height="5" fill="#2020d4"/><path d="M962.5 762a4.5 4.5 0 0 1 9 0" stroke="#2020d4" stroke-width="1.4" fill="none"/><text transform="translate(963,753) rotate(-90)" font-size="5.5" fill="#333" text-anchor="middle">1.5</text><text x="961" y="764" font-size="4.5" fill="#333" text-anchor="end" >1</text><circle cx="998" cy="722.5" r="2.5" fill="#fff" stroke="#2020d4" stroke-width="1.2"/><path d="M992 722.5h3.5" stroke="#2020d4" stroke-width="0.9" fill="none" /><rect x="995.8" y="761" width="4.4" height="5" fill="#2020d4"/><path d="M993.5 762a4.5 4.5 0 0 1 9 0" stroke="#2020d4" stroke-width="1.4" fill="none"/><text transform="translate(994,753) rotate(-90)" font-size="5.5" fill="#333" text-anchor="middle">1.6</text><text x="992" y="764" font-size="4.5" fill="#333" text-anchor="end" >1</text><text x="938" y="733.0" font-size="4.3" fill="#d01c34" text-anchor="start" >GY</text><text x="938" y="738.3" font-size="4.3" fill="#d01c34" text-anchor="start" >0,75</text><text x="971" y="733.0" font-size="4.3" fill="#d01c34" text-anchor="start" >GY</text><text x="971" y="738.3" font-size="4.3" fill="#d01c34" text-anchor="start" >0,75</text><text x="1002" y="733.0" font-size="4.3" fill="#d01c34" text-anchor="start" >GY</text><text x="1002" y="738.3" font-size="4.3" fill="#d01c34" text-anchor="start" >0,75</text><path d="M995 734.5l6 7" stroke="#c8182e" stroke-width="1.2" fill="none" /><rect x="913" y="766.5" width="108" height="75" fill="#fff" stroke="#2020d4" stroke-width="1.6"/><path d="M913 777H1021" stroke="#2020d4" stroke-width="1.4" fill="none" /><path d="M913 788H1021" stroke="#2020d4" stroke-width="1.4" fill="none" /><path d="M913 799H1021" stroke="#2020d4" stroke-width="1.4" fill="none" /><path d="M913 810H1021" stroke="#2020d4" stroke-width="1.4" fill="none" /><path d="M913 821H1021" stroke="#2020d4" stroke-width="1.4" fill="none" /><text x="934.5" y="773" font-size="5.8" fill="#333" text-anchor="middle" >IN3</text><text x="967" y="773" font-size="5.8" fill="#333" text-anchor="middle" >+</text><text x="998" y="773" font-size="5.8" fill="#333" text-anchor="middle" >-</text><text x="967" y="784" font-size="5.8" fill="#333" text-anchor="middle" >-KE2</text><text x="967" y="795" font-size="5.8" fill="#333" text-anchor="middle" >=K1+A2&amp;EFA1/ 2.5</text><text x="967" y="806" font-size="5.8" fill="#333" text-anchor="middle" >%IX3.2</text><text x="967" y="817" font-size="5.8" fill="#333" text-anchor="middle" >-FC1:14</text><text x="967" y="826.5" font-size="5.8" fill="#333" text-anchor="middle" >Overload protection "Feed"</text><text x="934" y="864" font-size="8.4" fill="#222" text-anchor="start" letter-spacing="-0.3">Overload protection</text><text x="934" y="873" font-size="8.4" fill="#222" text-anchor="start" >"Feed"</text><path d="M1054.0 485V302H1066.5V268.5H1216.0V485Z" stroke="#3a9e9e" stroke-width="1.3" fill="none" stroke-dasharray="6 3"/><text transform="translate(1062.5,285) rotate(-90)" font-size="8.2" fill="#2020d4" text-anchor="middle">=K1+A2</text><rect x="1107.5" y="290" width="108.5" height="76" fill="#fff" stroke="#2020d4" stroke-width="1.6"/><path d="M1107.5 311.5H1216.0" stroke="#2020d4" stroke-width="1.4" fill="none" /><path d="M1107.5 322.5H1216.0" stroke="#2020d4" stroke-width="1.4" fill="none" /><path d="M1107.5 333.5H1216.0" stroke="#2020d4" stroke-width="1.4" fill="none" /><path d="M1107.5 344.5H1216.0" stroke="#2020d4" stroke-width="1.4" fill="none" /><path d="M1107.5 355.5H1216.0" stroke="#2020d4" stroke-width="1.4" fill="none" /><text x="1161.5" y="309.6" font-size="5.8" fill="#333" text-anchor="middle" >Drive "Feed, forward"</text><text x="1161.5" y="318.5" font-size="5.8" fill="#333" text-anchor="middle" >-QA1:A1</text><text x="1161.5" y="329.5" font-size="5.8" fill="#333" text-anchor="middle" >%QX4.4</text><text x="1161.5" y="340.5" font-size="5.8" fill="#333" text-anchor="middle" >=K1+A2&amp;EFA1/ 5.5</text><text x="1161.5" y="351" font-size="5.8" fill="#333" text-anchor="middle" >-KE5</text><text x="1129" y="364" font-size="5.8" fill="#333" text-anchor="middle" >OUT5</text><text x="1161.5" y="364" font-size="5.8" fill="#333" text-anchor="middle" >+</text><text x="1194" y="364" font-size="5.8" fill="#333" text-anchor="middle" >-</text><rect x="1126.8" y="366" width="4.4" height="5" fill="#2020d4"/><path d="M1124.5 370a4.5 4.5 0 0 0 9 0" stroke="#2020d4" stroke-width="1.4" fill="none"/><text x="1123" y="373" font-size="4.5" fill="#333" text-anchor="end" >3</text><text transform="translate(1124,381) rotate(-90)" font-size="5.5" fill="#333" text-anchor="middle">5.1</text><path d="M1126 384.0l6 7" stroke="#c8182e" stroke-width="1.2" fill="none" /><text x="1133" y="380.0" font-size="4.3" fill="#d01c34" text-anchor="start" >GY</text><text x="1133" y="385.3" font-size="4.3" fill="#d01c34" text-anchor="start" >0,75</text><rect x="1159.3" y="366" width="4.4" height="5" fill="#2020d4"/><path d="M1157.0 370a4.5 4.5 0 0 0 9 0" stroke="#2020d4" stroke-width="1.4" fill="none"/><text x="1155.5" y="373" font-size="4.5" fill="#333" text-anchor="end" >3</text><text transform="translate(1156.5,381) rotate(-90)" font-size="5.5" fill="#333" text-anchor="middle">5.2</text><path d="M1158.5 384.0l6 7" stroke="#c8182e" stroke-width="1.2" fill="none" /><text x="1165.5" y="380.0" font-size="4.3" fill="#d01c34" text-anchor="start" >GY</text><text x="1165.5" y="385.3" font-size="4.3" fill="#d01c34" text-anchor="start" >0,75</text><rect x="1191.8" y="366" width="4.4" height="5" fill="#2020d4"/><path d="M1189.5 370a4.5 4.5 0 0 0 9 0" stroke="#2020d4" stroke-width="1.4" fill="none"/><text x="1188" y="373" font-size="4.5" fill="#333" text-anchor="end" >3</text><text transform="translate(1189,381) rotate(-90)" font-size="5.5" fill="#333" text-anchor="middle">5.3</text><path d="M1191 384.0l6 7" stroke="#c8182e" stroke-width="1.2" fill="none" /><text x="1198" y="380.0" font-size="4.3" fill="#d01c34" text-anchor="start" >GY</text><text x="1198" y="385.3" font-size="4.3" fill="#d01c34" text-anchor="start" >0,75</text><path d="M1129 375V798.5H1194V375 M1161.5 375V441" stroke="#e63232" stroke-width="1.5" fill="none" /><circle cx="1129" cy="441" r="2.5" fill="#fff" stroke="#2020d4" stroke-width="1.2"/><path d="M1123 441h3.5" stroke="#2020d4" stroke-width="0.9" fill="none" /><circle cx="1161.5" cy="441" r="2.5" fill="#fff" stroke="#2020d4" stroke-width="1.2"/><path d="M1155.5 441h3.5" stroke="#2020d4" stroke-width="0.9" fill="none" /><circle cx="1194" cy="441" r="2.5" fill="#fff" stroke="#2020d4" stroke-width="1.2"/><path d="M1188 441h3.5" stroke="#2020d4" stroke-width="0.9" fill="none" /><text x="1119.5" y="444.7" font-size="8.7" fill="#2020d4" text-anchor="end" stroke="#2020d4" stroke-width="0.22" textLength="18.7" lengthAdjust="spacingAndGlyphs">-XG1</text><text x="1118.5" y="462" font-size="8.7" fill="#2020d4" text-anchor="end" stroke="#2020d4" stroke-width="0.22" textLength="21.0" lengthAdjust="spacingAndGlyphs">-WG1</text><text x="1118.5" y="467.5" font-size="5.2" fill="#2020d4" text-anchor="end" >4G0,75</text><text x="1118.5" y="475" font-size="6" fill="#7c9e5c" text-anchor="end" >=GAB2+A2/ 1.6</text><path d="M1118.5 463.5H1205.5" stroke="#3434e0" stroke-width="1.5" fill="none" /><path d="M1126 460.0l6 7" stroke="#c8182e" stroke-width="1.2" fill="none" /><path d="M1191 460.0l6 7" stroke="#c8182e" stroke-width="1.2" fill="none" /><circle cx="1129" cy="647" r="2.5" fill="#fff" stroke="#2020d4" stroke-width="1.2"/><path d="M1123 647h3.5" stroke="#2020d4" stroke-width="0.9" fill="none" /><circle cx="1194" cy="647" r="2.5" fill="#fff" stroke="#2020d4" stroke-width="1.2"/><path d="M1188 647h3.5" stroke="#2020d4" stroke-width="0.9" fill="none" /><text x="1119.5" y="649.5" font-size="8.7" fill="#2020d4" text-anchor="end" stroke="#2020d4" stroke-width="0.22" textLength="18.7" lengthAdjust="spacingAndGlyphs">-XG1</text><path d="M1126 697.5l6 7" stroke="#c8182e" stroke-width="1.2" fill="none" /><path d="M1191 697.5l6 7" stroke="#c8182e" stroke-width="1.2" fill="none" /><text x="1133" y="688.0" font-size="4.3" fill="#d01c34" text-anchor="start" >GY</text><text x="1133" y="693.3" font-size="4.3" fill="#d01c34" text-anchor="start" >1.981 m</text><text x="1133" y="698.6" font-size="4.3" fill="#d01c34" text-anchor="start" >0,75</text><text x="1198" y="688.0" font-size="4.3" fill="#d01c34" text-anchor="start" >GY</text><text x="1198" y="693.3" font-size="4.3" fill="#d01c34" text-anchor="start" >1.615 m</text><text x="1198" y="698.6" font-size="4.3" fill="#d01c34" text-anchor="start" >0,75</text><path d="M1126 752.5l6 7" stroke="#c8182e" stroke-width="1.2" fill="none" /><text x="1133" y="744.0" font-size="4.3" fill="#d01c34" text-anchor="start" >GY</text><text x="1133" y="749.3" font-size="4.3" fill="#d01c34" text-anchor="start" >1.135 m</text><text x="1133" y="754.6" font-size="4.3" fill="#d01c34" text-anchor="start" >0,75</text><rect x="1126" y="711" width="7" height="25" fill="#fff"/><path d="M1129 711v6h4 M1134 717L1129 728V736" stroke="#2020d4" stroke-width="1.3" fill="none" /><text x="1118.5" y="725.6" font-size="8.7" fill="#2020d4" text-anchor="end" stroke="#2020d4" stroke-width="0.22" textLength="18.7" lengthAdjust="spacingAndGlyphs">-QA2</text><text x="1118.5" y="733" font-size="6" fill="#7c9e5c" text-anchor="end" >/ 1.9</text><text transform="translate(1124,713) rotate(-90)" font-size="5.5" fill="#333" text-anchor="middle">11</text><text transform="translate(1124,733) rotate(-90)" font-size="5.5" fill="#333" text-anchor="middle">12</text><rect x="1118" y="771.5" width="22" height="11" fill="#fff" stroke="#2020d4" stroke-width="1.5"/><path d="M1129 764v7 M1129 783v8" stroke="#2020d4" stroke-width="1.3" fill="none" /><text transform="translate(1124,765) rotate(-90)" font-size="5.5" fill="#333" text-anchor="middle">A1</text><text transform="translate(1124,789) rotate(-90)" font-size="5.5" fill="#333" text-anchor="middle">A2</text><text x="1113.5" y="779.8" font-size="8.7" fill="#2020d4" text-anchor="end" stroke="#2020d4" stroke-width="0.22" textLength="18.7" lengthAdjust="spacingAndGlyphs">-QA1</text><text x="1113.5" y="787.4" font-size="5.6" fill="#333" text-anchor="end" >DC 24V</text><text x="1129" y="863.6" font-size="8.4" fill="#222" text-anchor="start" letter-spacing="-0.3">Drive "Feed, forward"</text><text x="1118.5" y="882.5" font-size="5.8" fill="#333" text-anchor="end" >1/L1</text><path d="M1121 880.5h3 M1125 883.0l9 -4h3" stroke="#2020d4" stroke-width="1.2" fill="none" /><text x="1139" y="882.5" font-size="5.8" fill="#333" text-anchor="start" >2/T1</text><text x="1154" y="882.5" font-size="6" fill="#7c9e5c" text-anchor="start" >/ 1.1</text><text x="1118.5" y="891.57" font-size="5.8" fill="#333" text-anchor="end" >3/L2</text><path d="M1121 889.57h3 M1125 892.07l9 -4h3" stroke="#2020d4" stroke-width="1.2" fill="none" /><text x="1139" y="891.57" font-size="5.8" fill="#333" text-anchor="start" >4/T2</text><text x="1154" y="891.57" font-size="6" fill="#7c9e5c" text-anchor="start" >/ 1.1</text><text x="1118.5" y="900.64" font-size="5.8" fill="#333" text-anchor="end" >5/L3</text><path d="M1121 898.64h3 M1125 901.14l9 -4h3" stroke="#2020d4" stroke-width="1.2" fill="none" /><text x="1139" y="900.64" font-size="5.8" fill="#333" text-anchor="start" >6/T3</text><text x="1154" y="900.64" font-size="6" fill="#7c9e5c" text-anchor="start" >/ 1.1</text><text x="1118.5" y="909.71" font-size="5.8" fill="#333" text-anchor="end" >13</text><path d="M1121 907.71h3 M1125 910.21l9 -4h3" stroke="#2020d4" stroke-width="1.2" fill="none" /><text x="1139" y="909.71" font-size="5.8" fill="#333" text-anchor="start" >14</text><text x="1118.5" y="918.78" font-size="5.8" fill="#333" text-anchor="end" >23</text><path d="M1121 916.78h3 M1125 919.28l9 -4h3" stroke="#2020d4" stroke-width="1.2" fill="none" /><text x="1139" y="918.78" font-size="5.8" fill="#333" text-anchor="start" >24</text><text x="1118.5" y="927.85" font-size="5.8" fill="#333" text-anchor="end" >33</text><path d="M1121 925.85h3 M1125 928.35l9 -4h3" stroke="#2020d4" stroke-width="1.2" fill="none" /><text x="1139" y="927.85" font-size="5.8" fill="#333" text-anchor="start" >34</text><text x="1118.5" y="936.92" font-size="5.8" fill="#333" text-anchor="end" >11</text><path d="M1121 935.42h3v-3 M1123 932.92l7 3h5" stroke="#2020d4" stroke-width="1.2" fill="none" /><text x="1139" y="936.92" font-size="5.8" fill="#333" text-anchor="start" >12</text><text x="1118.5" y="945.99" font-size="5.8" fill="#333" text-anchor="end" >21</text><path d="M1121 944.49h3v-3 M1123 941.99l7 3h5" stroke="#2020d4" stroke-width="1.2" fill="none" /><text x="1139" y="945.99" font-size="5.8" fill="#333" text-anchor="start" >22</text><text x="1155" y="909.7" font-size="6" fill="#7c9e5c" text-anchor="start" >+A2/ 1.3</text><text x="1154" y="937" font-size="6" fill="#7c9e5c" text-anchor="start" >/ 1.9</text><path d="M1249.0 485V302H1261.5V268.5H1411.0V485Z" stroke="#3a9e9e" stroke-width="1.3" fill="none" stroke-dasharray="6 3"/><text transform="translate(1257.5,285) rotate(-90)" font-size="8.2" fill="#2020d4" text-anchor="middle">=K1+A2</text><rect x="1302.5" y="290" width="108.5" height="76" fill="#fff" stroke="#2020d4" stroke-width="1.6"/><path d="M1302.5 311.5H1411.0" stroke="#2020d4" stroke-width="1.4" fill="none" /><path d="M1302.5 322.5H1411.0" stroke="#2020d4" stroke-width="1.4" fill="none" /><path d="M1302.5 333.5H1411.0" stroke="#2020d4" stroke-width="1.4" fill="none" /><path d="M1302.5 344.5H1411.0" stroke="#2020d4" stroke-width="1.4" fill="none" /><path d="M1302.5 355.5H1411.0" stroke="#2020d4" stroke-width="1.4" fill="none" /><text x="1356.5" y="309.6" font-size="5.8" fill="#333" text-anchor="middle" >Drive "Feed, reverse"</text><text x="1356.5" y="318.5" font-size="5.8" fill="#333" text-anchor="middle" >-QA2:A1</text><text x="1356.5" y="329.5" font-size="5.8" fill="#333" text-anchor="middle" >%QX4.5</text><text x="1356.5" y="340.5" font-size="5.8" fill="#333" text-anchor="middle" >=K1+A2&amp;EFA1/ 5.5</text><text x="1356.5" y="351" font-size="5.8" fill="#333" text-anchor="middle" >-KE5</text><text x="1323.5" y="364" font-size="5.8" fill="#333" text-anchor="middle" >OUT6</text><text x="1356" y="364" font-size="5.8" fill="#333" text-anchor="middle" >+</text><text x="1388.5" y="364" font-size="5.8" fill="#333" text-anchor="middle" >-</text><rect x="1321.3" y="366" width="4.4" height="5" fill="#2020d4"/><path d="M1319.0 370a4.5 4.5 0 0 0 9 0" stroke="#2020d4" stroke-width="1.4" fill="none"/><text x="1317.5" y="373" font-size="4.5" fill="#333" text-anchor="end" >3</text><text transform="translate(1318.5,381) rotate(-90)" font-size="5.5" fill="#333" text-anchor="middle">6.1</text><path d="M1320.5 384.0l6 7" stroke="#c8182e" stroke-width="1.2" fill="none" /><text x="1327.5" y="380.0" font-size="4.3" fill="#d01c34" text-anchor="start" >GY</text><text x="1327.5" y="385.3" font-size="4.3" fill="#d01c34" text-anchor="start" >0,75</text><rect x="1353.8" y="366" width="4.4" height="5" fill="#2020d4"/><path d="M1351.5 370a4.5 4.5 0 0 0 9 0" stroke="#2020d4" stroke-width="1.4" fill="none"/><text x="1350" y="373" font-size="4.5" fill="#333" text-anchor="end" >3</text><text transform="translate(1351,381) rotate(-90)" font-size="5.5" fill="#333" text-anchor="middle">6.2</text><path d="M1353 384.0l6 7" stroke="#c8182e" stroke-width="1.2" fill="none" /><text x="1360" y="380.0" font-size="4.3" fill="#d01c34" text-anchor="start" >GY</text><text x="1360" y="385.3" font-size="4.3" fill="#d01c34" text-anchor="start" >0,75</text><rect x="1386.3" y="366" width="4.4" height="5" fill="#2020d4"/><path d="M1384.0 370a4.5 4.5 0 0 0 9 0" stroke="#2020d4" stroke-width="1.4" fill="none"/><text x="1382.5" y="373" font-size="4.5" fill="#333" text-anchor="end" >3</text><text transform="translate(1383.5,381) rotate(-90)" font-size="5.5" fill="#333" text-anchor="middle">6.3</text><path d="M1385.5 384.0l6 7" stroke="#c8182e" stroke-width="1.2" fill="none" /><text x="1392.5" y="380.0" font-size="4.3" fill="#d01c34" text-anchor="start" >GY</text><text x="1392.5" y="385.3" font-size="4.3" fill="#d01c34" text-anchor="start" >0,75</text><path d="M1323.5 375V798.5H1388.5V375 M1356 375V441" stroke="#e63232" stroke-width="1.5" fill="none" /><circle cx="1323.5" cy="441" r="2.5" fill="#fff" stroke="#2020d4" stroke-width="1.2"/><path d="M1317.5 441h3.5" stroke="#2020d4" stroke-width="0.9" fill="none" /><circle cx="1356" cy="441" r="2.5" fill="#fff" stroke="#2020d4" stroke-width="1.2"/><path d="M1350 441h3.5" stroke="#2020d4" stroke-width="0.9" fill="none" /><circle cx="1388.5" cy="441" r="2.5" fill="#fff" stroke="#2020d4" stroke-width="1.2"/><path d="M1382.5 441h3.5" stroke="#2020d4" stroke-width="0.9" fill="none" /><text x="1314.5" y="444.7" font-size="8.7" fill="#2020d4" text-anchor="end" stroke="#2020d4" stroke-width="0.22" textLength="18.7" lengthAdjust="spacingAndGlyphs">-XG1</text><text x="1313.5" y="462" font-size="8.7" fill="#2020d4" text-anchor="end" stroke="#2020d4" stroke-width="0.22" textLength="21.0" lengthAdjust="spacingAndGlyphs">-WG1</text><text x="1313.5" y="467.5" font-size="5.2" fill="#2020d4" text-anchor="end" >4G0,75</text><text x="1313.5" y="475" font-size="6" fill="#7c9e5c" text-anchor="end" >=GAB2+A2/ 1.6</text><path d="M1313.5 463.5H1400.5" stroke="#3434e0" stroke-width="1.5" fill="none" /><path d="M1320.5 460.0l6 7" stroke="#c8182e" stroke-width="1.2" fill="none" /><path d="M1385.5 460.0l6 7" stroke="#c8182e" stroke-width="1.2" fill="none" /><circle cx="1323.5" cy="647" r="2.5" fill="#fff" stroke="#2020d4" stroke-width="1.2"/><path d="M1317.5 647h3.5" stroke="#2020d4" stroke-width="0.9" fill="none" /><circle cx="1388.5" cy="647" r="2.5" fill="#fff" stroke="#2020d4" stroke-width="1.2"/><path d="M1382.5 647h3.5" stroke="#2020d4" stroke-width="0.9" fill="none" /><path d="M1320.5 697.5l6 7" stroke="#c8182e" stroke-width="1.2" fill="none" /><path d="M1385.5 697.5l6 7" stroke="#c8182e" stroke-width="1.2" fill="none" /><text x="1327.5" y="688.0" font-size="4.3" fill="#d01c34" text-anchor="start" >GY</text><text x="1327.5" y="693.3" font-size="4.3" fill="#d01c34" text-anchor="start" >1.981 m</text><text x="1327.5" y="698.6" font-size="4.3" fill="#d01c34" text-anchor="start" >0,75</text><text x="1392.5" y="688.0" font-size="4.3" fill="#d01c34" text-anchor="start" >GY</text><text x="1392.5" y="693.3" font-size="4.3" fill="#d01c34" text-anchor="start" >1.615 m</text><text x="1392.5" y="698.6" font-size="4.3" fill="#d01c34" text-anchor="start" >0,75</text><path d="M1320.5 752.5l6 7" stroke="#c8182e" stroke-width="1.2" fill="none" /><text x="1327.5" y="744.0" font-size="4.3" fill="#d01c34" text-anchor="start" >GY</text><text x="1327.5" y="749.3" font-size="4.3" fill="#d01c34" text-anchor="start" >1.135 m</text><text x="1327.5" y="754.6" font-size="4.3" fill="#d01c34" text-anchor="start" >0,75</text><rect x="1320.5" y="711" width="7" height="25" fill="#fff"/><path d="M1323.5 711v6h4 M1328.5 717L1323.5 728V736" stroke="#2020d4" stroke-width="1.3" fill="none" /><text x="1313.5" y="725.6" font-size="8.7" fill="#2020d4" text-anchor="end" stroke="#2020d4" stroke-width="0.22" textLength="18.7" lengthAdjust="spacingAndGlyphs">-QA1</text><text x="1313.5" y="733" font-size="6" fill="#7c9e5c" text-anchor="end" >/ 1.7</text><text transform="translate(1318.5,713) rotate(-90)" font-size="5.5" fill="#333" text-anchor="middle">11</text><text transform="translate(1318.5,733) rotate(-90)" font-size="5.5" fill="#333" text-anchor="middle">12</text><rect x="1312.5" y="771.5" width="22" height="11" fill="#fff" stroke="#2020d4" stroke-width="1.5"/><path d="M1323.5 764v7 M1323.5 783v8" stroke="#2020d4" stroke-width="1.3" fill="none" /><text transform="translate(1318.5,765) rotate(-90)" font-size="5.5" fill="#333" text-anchor="middle">A1</text><text transform="translate(1318.5,789) rotate(-90)" font-size="5.5" fill="#333" text-anchor="middle">A2</text><text x="1308.5" y="779.8" font-size="8.7" fill="#2020d4" text-anchor="end" stroke="#2020d4" stroke-width="0.22" textLength="18.7" lengthAdjust="spacingAndGlyphs">-QA2</text><text x="1308.5" y="787.4" font-size="5.6" fill="#333" text-anchor="end" >DC 24V</text><text x="1323.5" y="863.6" font-size="8.4" fill="#222" text-anchor="start" letter-spacing="-0.3">Drive "Feed, reverse"</text><text x="1313.0" y="882.5" font-size="5.8" fill="#333" text-anchor="end" >1/L1</text><path d="M1315.5 880.5h3 M1319.5 883.0l9 -4h3" stroke="#2020d4" stroke-width="1.2" fill="none" /><text x="1333.5" y="882.5" font-size="5.8" fill="#333" text-anchor="start" >2/T1</text><text x="1348.5" y="882.5" font-size="6" fill="#7c9e5c" text-anchor="start" >/ 1.2</text><text x="1313.0" y="891.57" font-size="5.8" fill="#333" text-anchor="end" >3/L2</text><path d="M1315.5 889.57h3 M1319.5 892.07l9 -4h3" stroke="#2020d4" stroke-width="1.2" fill="none" /><text x="1333.5" y="891.57" font-size="5.8" fill="#333" text-anchor="start" >4/T2</text><text x="1348.5" y="891.57" font-size="6" fill="#7c9e5c" text-anchor="start" >/ 1.2</text><text x="1313.0" y="900.64" font-size="5.8" fill="#333" text-anchor="end" >5/L3</text><path d="M1315.5 898.64h3 M1319.5 901.14l9 -4h3" stroke="#2020d4" stroke-width="1.2" fill="none" /><text x="1333.5" y="900.64" font-size="5.8" fill="#333" text-anchor="start" >6/T3</text><text x="1348.5" y="900.64" font-size="6" fill="#7c9e5c" text-anchor="start" >/ 1.2</text><text x="1313.0" y="909.71" font-size="5.8" fill="#333" text-anchor="end" >13</text><path d="M1315.5 907.71h3 M1319.5 910.21l9 -4h3" stroke="#2020d4" stroke-width="1.2" fill="none" /><text x="1333.5" y="909.71" font-size="5.8" fill="#333" text-anchor="start" >14</text><text x="1313.0" y="918.78" font-size="5.8" fill="#333" text-anchor="end" >23</text><path d="M1315.5 916.78h3 M1319.5 919.28l9 -4h3" stroke="#2020d4" stroke-width="1.2" fill="none" /><text x="1333.5" y="918.78" font-size="5.8" fill="#333" text-anchor="start" >24</text><text x="1313.0" y="927.85" font-size="5.8" fill="#333" text-anchor="end" >33</text><path d="M1315.5 925.85h3 M1319.5 928.35l9 -4h3" stroke="#2020d4" stroke-width="1.2" fill="none" /><text x="1333.5" y="927.85" font-size="5.8" fill="#333" text-anchor="start" >34</text><text x="1313.0" y="936.92" font-size="5.8" fill="#333" text-anchor="end" >11</text><path d="M1315.5 935.42h3v-3 M1317.5 932.92l7 3h5" stroke="#2020d4" stroke-width="1.2" fill="none" /><text x="1333.5" y="936.92" font-size="5.8" fill="#333" text-anchor="start" >12</text><text x="1313.0" y="945.99" font-size="5.8" fill="#333" text-anchor="end" >21</text><path d="M1315.5 944.49h3v-3 M1317.5 941.99l7 3h5" stroke="#2020d4" stroke-width="1.2" fill="none" /><text x="1333.5" y="945.99" font-size="5.8" fill="#333" text-anchor="start" >22</text><text x="1349.5" y="909.7" font-size="6" fill="#7c9e5c" text-anchor="start" >+A2/ 1.5</text><text x="1348.5" y="937" font-size="6" fill="#7c9e5c" text-anchor="start" >/ 1.7</text><text x="1382" y="947.5" font-size="8.5" fill="#222" text-anchor="start" letter-spacing="-0.3">+A2/1</text><path d="M287 950H1421 M287 993.5H1421" stroke="#1e1e1e" stroke-width="1.3" fill="none" /><path d="M287 961H448 M287 972H448 M287 982.5H448 M448 961.5H664 M448 982.5H664 M664 967H794 M664 983H794" stroke="#1e1e1e" stroke-width="1.0" fill="none" /><path d="M339.5 950V993 M393.5 950V993 M448 950V993 M664 950V993 M794.5 950V993" stroke="#1e1e1e" stroke-width="1.1" fill="none" /><path d="M956 950V993 M1129 950V993 M1225 950V993 M1322.5 950V993" stroke="#1e1e1e" stroke-width="1.1" fill="none" /><path d="M956 983H1129 M1129 961.5H1421 M1129 972H1421 M1129 983H1421" stroke="#1e1e1e" stroke-width="1.0" fill="none" /><text x="450" y="957.5" font-size="5" fill="#333" text-anchor="start" >Project name</text><text x="500" y="957.5" font-size="5" fill="#333" text-anchor="start" >ESS_Sample_Project</text><text x="450" y="969" font-size="8.3" fill="#222" text-anchor="start" letter-spacing="-0.2">Grinding machine</text><text x="289" y="990" font-size="5" fill="#333" text-anchor="start" >Modification</text><text x="342" y="990" font-size="5" fill="#333" text-anchor="start" >Date</text><text x="396" y="990" font-size="5" fill="#333" text-anchor="start" >Name</text><text x="450" y="990" font-size="5" fill="#333" text-anchor="start" >Creator</text><text x="500" y="990" font-size="5" fill="#333" text-anchor="start" >EPL</text><text x="666" y="956.5" font-size="5" fill="#333" text-anchor="start" >Job number</text><text x="666" y="964.5" font-size="5" fill="#333" text-anchor="start" >001</text><text x="666" y="973.5" font-size="5" fill="#333" text-anchor="start" >Drawing number</text><text x="666" y="990" font-size="5" fill="#333" text-anchor="start" >Approved by</text><text x="796" y="960.5" font-size="8.2" fill="#222" text-anchor="start" letter-spacing="-0.3">EPLAN GmbH &amp; Co. KG</text><rect x="921" y="952" width="28" height="21" fill="#d8202a"/><path d="M926 970l6 -15 M932.5 970l6 -15 M939 970l6 -15" stroke="#fff" stroke-width="2.2"/><text x="922" y="983" font-size="7" fill="#d8202a" text-anchor="start" font-style="italic" font-weight="bold" letter-spacing="-0.3">ePLAN</text><rect x="921" y="985" width="28" height="4" fill="#d8202a"/><text x="958" y="960.5" font-size="8.3" fill="#222" text-anchor="start" letter-spacing="-0.2">Actuator control</text><text x="958" y="990" font-size="5" fill="#333" text-anchor="start" >Date</text><text x="990" y="990" font-size="5" fill="#333" text-anchor="start" >8/27/2021</text><text x="1020" y="990" font-size="5" fill="#333" text-anchor="start" >Ed.</text><text x="1093" y="990" font-size="5" fill="#333" text-anchor="start" >US84500029</text><text x="1227" y="958" font-size="5" fill="#333" text-anchor="start" >=GL1</text><text x="1227" y="968" font-size="4" fill="#333" text-anchor="start" >Feed workpiece: Transport</text><text x="1227" y="980" font-size="5" fill="#333" text-anchor="start" >+A1</text><text x="1227" y="990" font-size="4" fill="#333" text-anchor="start" >Enclosure 1</text><text x="1324" y="958" font-size="5" fill="#333" text-anchor="start" >&amp;EFS1</text><text x="1324" y="968" font-size="4" fill="#333" text-anchor="start" >Electrical engineering schematic</text><text x="1324" y="980" font-size="5" fill="#333" text-anchor="start" >Page</text><text x="1324" y="990" font-size="5" fill="#333" text-anchor="start" >Page</text><text x="1418" y="980" font-size="5" fill="#333" text-anchor="end" >1</text><text x="1362" y="990" font-size="5" fill="#333" text-anchor="start" >251</text><text x="1380" y="990" font-size="5" fill="#333" text-anchor="start" >from</text><text x="1418" y="990" font-size="5" fill="#333" text-anchor="end" >307</text></g></svg>
<div class="a" style="left:1424px;top:183px;width:6px;height:831px;background:#2b2b2b;"></div>
<div class="a" style="left:1430px;top:186px;width:220px;height:828px;background:#2d2d2d;"></div>
<div class="a" style="left:1430px;top:186px;width:220px;height:26px;background:#303030;"></div>
<div class="t" style="left:1434px;top:193.8px;font-size:12px;color:#e8e8e8;">Insert center</div>
<svg class="a" style="left:1612px;top:194px" width="35" height="14"><path d="M1 4h10l-5 6z" fill="#ddd"/><path d="M22 2h6M23 2v5h4v-5M25 7v4M21 7h8" stroke="#ddd" stroke-width="1.2" fill="none"/></svg>
<div class="a" style="left:1431px;top:214px;width:218px;height:22px;background:#2a2a2a;border:1px solid #444;box-sizing:border-box;"></div>
<div class="t" style="left:1437px;top:219.8px;font-size:12px;color:#9a9a9a;">Find</div>
<svg class="a" style="left:1626px;top:216px" width="18" height="18" fill="none" stroke="#1b8ad0" stroke-width="1.8"><circle cx="11" cy="7" r="5"/><path d="M7.5 10.5l-5 5"/></svg>
<div class="a" style="left:1430px;top:236px;width:220px;height:11px;background:#262626;"></div>
<div class="a" style="left:1431px;top:248px;width:24px;height:22px;background:#2c2c2c;"></div>
<div class="a" style="left:1458px;top:248px;width:24px;height:22px;background:#2c2c2c;"></div>
<div class="a" style="left:1485px;top:248px;width:163px;height:22px;background:#2c2c2c;border:1px solid #3d3d3d;box-sizing:border-box;"></div>
<svg class="a" style="left:1434px;top:250px" width="16" height="16" fill="none" stroke="#eee" stroke-width="1.3"><path d="M2 8l6-5 6 5 M4 7v6h8v-6 M7 13v-4h2v4"/></svg>
<svg class="a" style="left:1462px;top:251px" width="16" height="14" fill="none" stroke="#eee" stroke-width="1.4"><path d="M2 7h12 M7 2l-5 5 5 5"/></svg>
<div class="t" style="left:1488px;top:252.8px;font-size:12px;color:#eee;">«</div>
<div class="t" style="left:1506px;top:252.8px;font-size:12px;color:#eee;">SIE</div>
<div class="a" style="left:1438px;top:281px;width:98px;height:152px;background:#2a2a2a;"></div>
<div class="a" style="left:1438px;top:281px;width:98px;height:118px;background:#ffffff;"></div>
<div class="t" style="left:1440px;top:402.7px;font-size:11px;color:#e8e8e8;">SIE.3RV2011-1EA</div>
<div class="t" style="left:1440px;top:418.7px;font-size:11px;color:#e8e8e8;">25</div>
<svg class="a" style="left:1440px;top:283px" width="36" height="18" fill="none" stroke="#1b8ad0" stroke-width="1.3"><path d="M8 1.5l2 4.2 4.5.5-3.4 3 1 4.5-4.1-2.3-4.1 2.3 1-4.5-3.4-3 4.5-.5z"/><path d="M23 2h8v13l-4-3-4 3z"/><circle cx="27" cy="6" r="1.2"/></svg>
<svg class="a" style="left:1458px;top:302px" width="60" height="100" viewBox="0 0 60 100">
<path d="M12 0h38l5 6v86l-5 5h-6v-90z" fill="#2b2f35"/>
<path d="M10 8l6-8h30v16h-36z" fill="#25282c"/>
<rect x="8" y="14" width="38" height="22" fill="#4a5d76"/>
<g fill="#1f2328"><rect x="11" y="17" width="7" height="12"/><rect x="22" y="17" width="7" height="12"/><rect x="33" y="17" width="7" height="12"/></g>
<rect x="4" y="32" width="40" height="14" fill="#4a5d76"/>
<g fill="#1f2328"><rect x="6" y="35" width="3" height="3"/><rect x="11" y="35" width="3" height="3"/><rect x="16" y="35" width="3" height="3"/><rect x="25" y="35" width="3" height="3"/><rect x="30" y="35" width="3" height="3"/><rect x="35" y="35" width="3" height="3"/><rect x="6" y="40" width="3" height="3"/><rect x="11" y="40" width="3" height="3"/><rect x="25" y="40" width="3" height="3"/><rect x="30" y="40" width="3" height="3"/></g>
<rect x="0" y="44" width="44" height="36" fill="#56708e"/>
<rect x="10" y="46" width="12" height="3" fill="#5fb8c0"/>
<circle cx="6" cy="56" r="3" fill="#4a5d76"/>
<path d="M8 70q8-10 20-6q8 4 4 10l-14 6z" fill="#1d2024"/>
<rect x="8" y="78" width="36" height="20" fill="#4a5d76"/>
<g fill="#1f2328"><rect x="11" y="82" width="7" height="14"/><rect x="22" y="82" width="7" height="14"/><rect x="33" y="82" width="7" height="14"/></g>
</svg>
<div class="a" style="left:1542px;top:281px;width:98px;height:152px;background:#2a2a2a;"></div>
<div class="a" style="left:1542px;top:281px;width:98px;height:118px;background:#ffffff;"></div>
<div class="t" style="left:1544px;top:402.7px;font-size:11px;color:#e8e8e8;">SIE.3RV2011-1EA</div>
<div class="t" style="left:1544px;top:418.7px;font-size:11px;color:#e8e8e8;">25-0BA0</div>
<svg class="a" style="left:1544px;top:283px" width="36" height="18" fill="none" stroke="#1b8ad0" stroke-width="1.3"><path d="M8 1.5l2 4.2 4.5.5-3.4 3 1 4.5-4.1-2.3-4.1 2.3 1-4.5-3.4-3 4.5-.5z"/><path d="M23 2h8v13l-4-3-4 3z"/><circle cx="27" cy="6" r="1.2"/></svg>
<svg class="a" style="left:1586px;top:303px" width="60" height="100" viewBox="0 0 60 100">
<path d="M12 0h38l5 6v86l-5 5h-6v-90z" fill="#283039"/>
<path d="M10 8l6-8h30v16h-36z" fill="#25282c"/>
<rect x="8" y="14" width="38" height="22" fill="#3a4858"/>
<g fill="#1f2328"><rect x="11" y="17" width="7" height="12"/><rect x="22" y="17" width="7" height="12"/><rect x="33" y="17" width="7" height="12"/></g>
<rect x="4" y="32" width="40" height="14" fill="#3a4858"/>
<g fill="#1f2328"><rect x="6" y="35" width="3" height="3"/><rect x="11" y="35" width="3" height="3"/><rect x="16" y="35" width="3" height="3"/><rect x="25" y="35" width="3" height="3"/><rect x="30" y="35" width="3" height="3"/><rect x="35" y="35" width="3" height="3"/><rect x="6" y="40" width="3" height="3"/><rect x="11" y="40" width="3" height="3"/><rect x="25" y="40" width="3" height="3"/><rect x="30" y="40" width="3" height="3"/></g>
<rect x="0" y="44" width="44" height="36" fill="#425264"/>
<rect x="10" y="46" width="12" height="3" fill="#5fb8c0"/>
<circle cx="6" cy="56" r="3" fill="#3a4858"/>
<path d="M8 70q8-10 20-6q8 4 4 10l-14 6z" fill="#1d2024"/>
<rect x="8" y="78" width="36" height="20" fill="#3a4858"/>
<g fill="#1f2328"><rect x="11" y="82" width="7" height="14"/><rect x="22" y="82" width="7" height="14"/><rect x="33" y="82" width="7" height="14"/></g>
</svg>
<div class="a" style="left:1438px;top:440px;width:98px;height:152px;background:#2a2a2a;"></div>
<div class="a" style="left:1438px;top:440px;width:98px;height:118px;background:#ffffff;"></div>
<div class="t" style="left:1440px;top:561.7px;font-size:11px;color:#e8e8e8;">SIE.3RV2011-1GA</div>
<div class="t" style="left:1440px;top:577.7px;font-size:11px;color:#e8e8e8;">15</div>
<svg class="a" style="left:1440px;top:442px" width="36" height="18" fill="none" stroke="#1b8ad0" stroke-width="1.3"><path d="M8 1.5l2 4.2 4.5.5-3.4 3 1 4.5-4.1-2.3-4.1 2.3 1-4.5-3.4-3 4.5-.5z"/><path d="M23 2h8v13l-4-3-4 3z"/><circle cx="27" cy="6" r="1.2"/></svg>
<svg class="a" style="left:1454px;top:460px" width="60" height="100" viewBox="0 0 60 100">
<path d="M12 0h38l5 6v86l-5 5h-6v-90z" fill="#2b2f35"/>
<path d="M10 8l6-8h30v16h-36z" fill="#25282c"/>
<rect x="8" y="14" width="38" height="22" fill="#4a5d76"/>
<g fill="#1f2328"><circle cx="16" cy="24" r="3"/><circle cx="27" cy="24" r="3"/><circle cx="38" cy="24" r="3"/></g>
<rect x="0" y="36" width="44" height="44" fill="#56708e"/>
<rect x="10" y="38" width="12" height="3" fill="#5fb8c0"/>
<circle cx="6" cy="48" r="3" fill="#4a5d76"/>
<path d="M8 62q8-10 20-6q8 4 4 10l-14 6z" fill="#1d2024"/>
<rect x="8" y="78" width="36" height="20" fill="#4a5d76"/>
<g fill="#1f2328"><circle cx="16" cy="88" r="3"/><circle cx="27" cy="88" r="3"/><circle cx="38" cy="88" r="3"/></g>
</svg>
<div class="a" style="left:1542px;top:440px;width:98px;height:152px;background:#2a2a2a;"></div>
<div class="a" style="left:1542px;top:440px;width:98px;height:118px;background:#ffffff;"></div>
<div class="t" style="left:1544px;top:561.7px;font-size:11px;color:#e8e8e8;">SIE.3RV2011-4AA</div>
<div class="t" style="left:1544px;top:577.7px;font-size:11px;color:#e8e8e8;">10</div>
<svg class="a" style="left:1544px;top:442px" width="36" height="18" fill="none" stroke="#1b8ad0" stroke-width="1.3"><path d="M8 1.5l2 4.2 4.5.5-3.4 3 1 4.5-4.1-2.3-4.1 2.3 1-4.5-3.4-3 4.5-.5z"/><path d="M23 2h8v13l-4-3-4 3z"/><circle cx="27" cy="6" r="1.2"/></svg>
<svg class="a" style="left:1558px;top:460px" width="60" height="100" viewBox="0 0 60 100">
<path d="M12 0h38l5 6v86l-5 5h-6v-90z" fill="#2b2f35"/>
<path d="M10 8l6-8h30v16h-36z" fill="#25282c"/>
<rect x="8" y="14" width="38" height="22" fill="#4a5d76"/>
<g fill="#1f2328"><circle cx="16" cy="24" r="3"/><circle cx="27" cy="24" r="3"/><circle cx="38" cy="24" r="3"/></g>
<rect x="0" y="36" width="44" height="44" fill="#56708e"/>
<rect x="10" y="38" width="12" height="3" fill="#5fb8c0"/>
<circle cx="6" cy="48" r="3" fill="#4a5d76"/>
<path d="M8 62q8-10 20-6q8 4 4 10l-14 6z" fill="#1d2024"/>
<rect x="8" y="78" width="36" height="20" fill="#4a5d76"/>
<g fill="#1f2328"><circle cx="16" cy="88" r="3"/><circle cx="27" cy="88" r="3"/><circle cx="38" cy="88" r="3"/></g>
</svg>
<div class="a" style="left:1436px;top:596px;width:101px;height:155px;background:#8a8a8a;"></div>
<div class="a" style="left:1438px;top:598px;width:98px;height:152px;background:#2a2a2a;"></div>
<div class="a" style="left:1438px;top:598px;width:98px;height:118px;background:#ffffff;"></div>
<div class="t" style="left:1440px;top:719.7px;font-size:11px;color:#e8e8e8;">SIE.3RV2011-4AA</div>
<div class="t" style="left:1440px;top:735.7px;font-size:11px;color:#e8e8e8;">10-0BA0</div>
<svg class="a" style="left:1440px;top:600px" width="36" height="18" fill="none" stroke="#1b8ad0" stroke-width="1.3"><path d="M8 1.5l2 4.2 4.5.5-3.4 3 1 4.5-4.1-2.3-4.1 2.3 1-4.5-3.4-3 4.5-.5z"/><path d="M23 2h8v13l-4-3-4 3z"/><circle cx="27" cy="6" r="1.2"/></svg>
<svg class="a" style="left:1454px;top:618px" width="60" height="100" viewBox="0 0 60 100">
<path d="M12 0h38l5 6v86l-5 5h-6v-90z" fill="#2b2f35"/>
<path d="M10 8l6-8h30v16h-36z" fill="#25282c"/>
<rect x="8" y="14" width="38" height="22" fill="#4a5d76"/>
<g fill="#1f2328"><circle cx="16" cy="24" r="3"/><circle cx="27" cy="24" r="3"/><circle cx="38" cy="24" r="3"/></g>
<rect x="0" y="36" width="44" height="44" fill="#56708e"/>
<rect x="10" y="38" width="12" height="3" fill="#5fb8c0"/>
<circle cx="6" cy="48" r="3" fill="#4a5d76"/>
<path d="M8 62q8-10 20-6q8 4 4 10l-14 6z" fill="#1d2024"/>
<rect x="8" y="78" width="36" height="20" fill="#4a5d76"/>
<g fill="#1f2328"><circle cx="16" cy="88" r="3"/><circle cx="27" cy="88" r="3"/><circle cx="38" cy="88" r="3"/></g>
</svg>
<div class="a" style="left:1430px;top:778px;width:220px;height:7px;background:#222222;"></div>
<div class="a" style="left:1430px;top:785px;width:220px;height:5px;background:#3a3a3a;"></div>
<div class="a" style="left:1430px;top:790px;width:220px;height:7px;background:#252525;"></div>
<div class="a" style="left:1431px;top:797px;width:216px;height:21px;background:#3a3a3a;"></div>
<div class="t" style="left:1436px;top:802.8px;font-size:12px;color:#e8e8e8;">Property</div>
<div class="t" style="left:1545px;top:802.8px;font-size:12px;color:#e8e8e8;">Value</div>
<div class="a" style="left:1540px;top:797px;width:1px;height:21px;background:#2a2a2a;"></div>
<div class="a" style="left:1431px;top:818px;width:216px;height:194px;background:#262626;"></div>
<div class="a" style="left:1539px;top:818px;width:2px;height:194px;background:#333;"></div>
<div class="t" style="left:1434px;top:822.8px;font-size:12px;color:#e6e6e6;">Part number</div>
<div class="t" style="left:1543px;top:822.8px;font-size:12px;color:#e6e6e6;">SIE.3RV2011-4AA...</div>
<div class="t" style="left:1434px;top:841.6px;font-size:12px;color:#e6e6e6;">ERP number</div>
<div class="t" style="left:1543px;top:841.6px;font-size:12px;color:#e6e6e6;"></div>
<div class="t" style="left:1434px;top:860.4px;font-size:12px;color:#e6e6e6;">Part: Designation 1</div>
<div class="t" style="left:1543px;top:860.4px;font-size:12px;color:#e6e6e6;">CIRCUIT-BREAKE...</div>
<div class="t" style="left:1434px;top:879.2px;font-size:12px;color:#e6e6e6;">Part: Designation 2</div>
<div class="t" style="left:1543px;top:879.2px;font-size:12px;color:#e6e6e6;">SIRIUS Circuit bre...</div>
<div class="t" style="left:1434px;top:898.0px;font-size:12px;color:#e6e6e6;">Part: Designation 3</div>
<div class="t" style="left:1543px;top:898.0px;font-size:12px;color:#e6e6e6;"></div>
<div class="t" style="left:1434px;top:916.7px;font-size:12px;color:#e6e6e6;">Description</div>
<div class="t" style="left:1543px;top:916.7px;font-size:12px;color:#e6e6e6;">CIRCUIT-BREAKE...</div>
<div class="t" style="left:1434px;top:935.5px;font-size:12px;color:#e6e6e6;">Schematic macro</div>
<div class="t" style="left:1543px;top:935.5px;font-size:12px;color:#e6e6e6;">Siemens\Industri...</div>
<div class="t" style="left:1434px;top:954.3px;font-size:12px;color:#e6e6e6;">Graphical macro</div>
<div class="t" style="left:1543px;top:954.3px;font-size:12px;color:#e6e6e6;">$(MD_MACROS)\...</div>
<div class="t" style="left:1434px;top:973.1px;font-size:12px;color:#e6e6e6;">Creator / Creation...</div>
<div class="t" style="left:1543px;top:973.1px;font-size:12px;color:#e6e6e6;">EDP / 31.01.2017 ...</div>
<div class="t" style="left:1434px;top:991.9px;font-size:12px;color:#e6e6e6;">Last editor / Modi...</div>
<div class="t" style="left:1543px;top:991.9px;font-size:12px;color:#e6e6e6;">EPL / 11.07.2018 1...</div>
<div class="a" style="left:1431px;top:820px;width:107px;height:18px;background:none;border:2px solid #bdbdbd;box-sizing:border-box;"></div>
<div class="a" style="left:1650px;top:158px;width:5px;height:882px;background:#2b2b2b;"></div>
<div class="a" style="left:1655px;top:158px;width:235px;height:24px;background:#2d2d2d;"></div>
<div class="t" style="left:1660px;top:164.8px;font-size:12px;color:#e8e8e8;">Property overview</div>
<svg class="a" style="left:1836px;top:165px" width="52" height="12"><path d="M1 3h10l-5 6z" fill="#ddd"/><path d="M22 1h6M23 1v5h4v-5M25 6v5M21 6h8" stroke="#ddd" stroke-width="1.2" fill="none"/><path d="M39 2l8 8M47 2l-8 8" stroke="#ddd" stroke-width="1.4"/></svg>
<div class="a" style="left:1655px;top:182px;width:235px;height:27px;background:#2d2d2d;"></div>
<div class="a" style="left:1658px;top:184px;width:26px;height:24px;background:#353535;"></div>
<div class="a" style="left:1684px;top:184px;width:25px;height:24px;background:none;border:2px solid #9a9a9a;box-sizing:border-box;"></div>
<div class="a" style="left:1716px;top:184px;width:26px;height:24px;background:#353535;"></div>
<div class="a" style="left:1743px;top:184px;width:26px;height:24px;background:#353535;"></div>
<div class="a" style="left:1770px;top:184px;width:24px;height:24px;background:none;border:2px solid #9a9a9a;box-sizing:border-box;"></div>
<div class="a" style="left:1803px;top:184px;width:48px;height:24px;background:#3a3a3a;"></div>
<div class="a" style="left:1838px;top:184px;width:13px;height:24px;background:#454545;"></div>
<div class="a" style="left:1857px;top:184px;width:33px;height:24px;background:#333;"></div>
<svg class="a" style="left:1660px;top:186px" width="140" height="20" fill="none" stroke="#eee" stroke-width="1.3">
<rect x="2" y="3" width="3" height="3" fill="#eee"/><path d="M3.5 6v9h6 M3.5 10h6"/><rect x="10" y="8" width="3" height="3" fill="#eee"/><rect x="10" y="13" width="3" height="3" fill="#eee"/>
<path d="M29 5h11 M29 8h11 M29 11h11 M29 14h11"/>
<path d="M62 4h5l2 2v8h-7z M64 6h5l2 2v8h-7z"/><path d="M66 12l1 1 2-2" stroke="#5cb85c"/>
<path d="M89 4h5v8h-5z M92 7h6l2 2v7h-8z" fill="#ddd"/><path d="M93 13l1 1 2-2" stroke="#5cb85c"/>
<circle cx="115" cy="6" r="3"/><path d="M110 14a5 3 0 0 1 10 0z" fill="#eee"/><path d="M118 10h6l-3 3v3"/>
</svg>
<div class="t" style="left:1806px;top:190.8px;font-size:12px;color:#e8e8e8;">Devic</div>
<svg class="a" style="left:1841px;top:194px" width="8" height="5"><path d="M0 0h7l-3.5 4z" fill="#ccc"/></svg>
<div class="t" style="left:1866px;top:190.8px;font-size:12px;color:#e8e8e8;">...</div>
<div class="a" style="left:1655px;top:209px;width:235px;height:6px;background:#262626;"></div>
<div class="a" style="left:1657px;top:215px;width:231px;height:21px;background:#2a2a2a;border:1px solid #444;box-sizing:border-box;"></div>
<div class="t" style="left:1663px;top:219.8px;font-size:12px;color:#9a9a9a;">Find</div>
<svg class="a" style="left:1868px;top:217px" width="18" height="18" fill="none" stroke="#1b8ad0" stroke-width="1.8"><circle cx="11" cy="7" r="5"/><path d="M7.5 10.5l-5 5"/></svg>
<div class="a" style="left:1655px;top:236px;width:235px;height:13px;background:#262626;"></div>
<div class="a" style="left:1655px;top:249px;width:235px;height:441px;background:#303030;"></div>
<div class="a" style="left:1658px;top:249px;width:27px;height:21px;background:#2e2e2e;"></div>
<svg class="a" style="left:1668px;top:254px" width="14" height="14"><path d="M13 1v12h-12z" fill="#3c3c3c"/></svg>
<div class="a" style="left:1686px;top:249px;width:98px;height:21px;background:#3a3a3a;"></div>
<div class="a" style="left:1784px;top:249px;width:106px;height:21px;background:#3a3a3a;"></div>
<div class="t" style="left:1692px;top:253.8px;font-size:12px;color:#e8e8e8;">Property</div>
<div class="t" style="left:1790px;top:253.8px;font-size:12px;color:#e8e8e8;">Value</div>
<div class="a" style="left:1658px;top:271.0px;width:27px;height:18px;background:#2e2e2e;"></div>
<div class="a" style="left:1686px;top:271.0px;width:98px;height:18px;background:#0f0f0f;"></div>
<div class="a" style="left:1784px;top:271.0px;width:106px;height:18px;background:#1e1e1e;"></div>
<div class="t" style="left:1667px;top:274.8px;font-size:12px;color:#dcdcdc;">1</div>
<svg class="a" style="left:1706px;top:272.0px" width="14" height="16" fill="none"><path d="M2 1h7l3 3v11h-10z M9 1v3h3" stroke="#ddd" stroke-width="1.1"/><path d="M4 11l2 2 4-4" stroke="#5cb85c" stroke-width="1.2"/></svg>
<div class="t" style="left:1728px;top:274.8px;font-size:12px;color:#f0f0f0;">DT (iden...</div>
<div class="t" style="left:1788px;top:274.8px;font-size:12px;color:#f0f0f0;">=GL1+A1-FC1</div>
<div class="a" style="left:1658px;top:289.75px;width:27px;height:18px;background:#2e2e2e;"></div>
<div class="a" style="left:1686px;top:289.75px;width:98px;height:18px;background:#0f0f0f;"></div>
<div class="a" style="left:1784px;top:289.75px;width:106px;height:18px;background:#1e1e1e;"></div>
<div class="t" style="left:1667px;top:293.6px;font-size:12px;color:#dcdcdc;">2</div>
<svg class="a" style="left:1706px;top:290.8px" width="14" height="16" fill="none"><path d="M2 1h7l3 3v11h-10z M9 1v3h3" stroke="#ddd" stroke-width="1.1"/><path d="M4 11l2 2 4-4" stroke="#5cb85c" stroke-width="1.2"/></svg>
<div class="t" style="left:1728px;top:293.6px;font-size:12px;color:#f0f0f0;">DT (disp...</div>
<div class="t" style="left:1788px;top:293.6px;font-size:12px;color:#f0f0f0;">-FC1</div>
<div class="a" style="left:1658px;top:308.5px;width:27px;height:18px;background:#2e2e2e;"></div>
<div class="a" style="left:1686px;top:308.5px;width:98px;height:18px;background:#0f0f0f;"></div>
<div class="a" style="left:1784px;top:308.5px;width:106px;height:18px;background:#1e1e1e;"></div>
<div class="t" style="left:1667px;top:312.3px;font-size:12px;color:#dcdcdc;">3</div>
<svg class="a" style="left:1706px;top:309.5px" width="14" height="16" fill="none"><path d="M2 1h7l3 3v11h-10z M9 1v3h3" stroke="#ddd" stroke-width="1.1"/><path d="M4 11l2 2 4-4" stroke="#5cb85c" stroke-width="1.2"/></svg>
<div class="t" style="left:1728px;top:312.3px;font-size:12px;color:#f0f0f0;">DT (full)</div>
<div class="t" style="left:1788px;top:312.3px;font-size:12px;color:#f0f0f0;">=GL1+A1-FC1</div>
<div class="a" style="left:1658px;top:327.25px;width:27px;height:18px;background:#2e2e2e;"></div>
<div class="a" style="left:1686px;top:327.25px;width:98px;height:18px;background:#0f0f0f;"></div>
<div class="a" style="left:1784px;top:327.25px;width:106px;height:18px;background:#1e1e1e;"></div>
<div class="t" style="left:1667px;top:331.1px;font-size:12px;color:#dcdcdc;">4</div>
<svg class="a" style="left:1706px;top:328.2px" width="14" height="16" fill="none"><path d="M2 1h7l3 3v11h-10z M9 1v3h3" stroke="#ddd" stroke-width="1.1"/><path d="M4 11l2 2 4-4" stroke="#5cb85c" stroke-width="1.2"/></svg>
<div class="t" style="left:1728px;top:331.1px;font-size:12px;color:#f0f0f0;">Connec...</div>
<div class="t" style="left:1788px;top:331.1px;font-size:12px;color:#f0f0f0;">1/L1¶2/T1¶3/L2¶4...</div>
<div class="a" style="left:1658px;top:346.0px;width:27px;height:18px;background:#2e2e2e;"></div>
<div class="a" style="left:1686px;top:346.0px;width:98px;height:18px;background:#0f0f0f;"></div>
<div class="a" style="left:1784px;top:346.0px;width:106px;height:18px;background:#1e1e1e;"></div>
<div class="t" style="left:1667px;top:349.8px;font-size:12px;color:#dcdcdc;">5</div>
<svg class="a" style="left:1706px;top:347.0px" width="14" height="16" fill="none"><path d="M2 1h7l3 3v11h-10z M9 1v3h3" stroke="#ddd" stroke-width="1.1"/><path d="M4 11l2 2 4-4" stroke="#5cb85c" stroke-width="1.2"/></svg>
<div class="t" style="left:1728px;top:349.8px;font-size:12px;color:#f0f0f0;">Functio...</div>
<svg class="a" style="left:1787px;top:348.0px" width="14" height="14" fill="none" stroke="#ddd" stroke-width="1.1"><rect x="1" y="1" width="8" height="8" fill="#555"/><rect x="5" y="5" width="8" height="8" fill="#888"/></svg>
<div class="a" style="left:1658px;top:364.75px;width:27px;height:18px;background:#2e2e2e;"></div>
<div class="a" style="left:1686px;top:364.75px;width:98px;height:18px;background:#0f0f0f;"></div>
<div class="a" style="left:1784px;top:364.75px;width:106px;height:18px;background:#1e1e1e;"></div>
<div class="t" style="left:1667px;top:368.6px;font-size:12px;color:#dcdcdc;">6</div>
<svg class="a" style="left:1706px;top:365.8px" width="14" height="16" fill="none"><path d="M2 1h7l3 3v11h-10z M9 1v3h3" stroke="#ddd" stroke-width="1.1"/><path d="M4 11l2 2 4-4" stroke="#5cb85c" stroke-width="1.2"/></svg>
<div class="t" style="left:1728px;top:368.6px;font-size:12px;color:#f0f0f0;">Functio...</div>
<div class="t" style="left:1788px;top:368.6px;font-size:12px;color:#f0f0f0;">Drive "Feed"¶</div>
<div class="a" style="left:1658px;top:383.5px;width:27px;height:18px;background:#2e2e2e;"></div>
<div class="a" style="left:1686px;top:383.5px;width:98px;height:18px;background:#0f0f0f;"></div>
<div class="a" style="left:1784px;top:383.5px;width:106px;height:18px;background:#1e1e1e;"></div>
<div class="t" style="left:1667px;top:387.3px;font-size:12px;color:#dcdcdc;">7</div>
<svg class="a" style="left:1706px;top:384.5px" width="14" height="16" fill="none"><path d="M2 1h7l3 3v11h-10z M9 1v3h3" stroke="#ddd" stroke-width="1.1"/><path d="M4 11l2 2 4-4" stroke="#5cb85c" stroke-width="1.2"/></svg>
<div class="t" style="left:1728px;top:387.3px;font-size:12px;color:#f0f0f0;">Technic...</div>
<div class="t" style="left:1788px;top:387.3px;font-size:12px;color:#f0f0f0;">1,4...2A, N:  26A</div>
<div class="a" style="left:1658px;top:402.25px;width:27px;height:18px;background:#2e2e2e;"></div>
<div class="a" style="left:1686px;top:402.25px;width:98px;height:18px;background:#0f0f0f;"></div>
<div class="a" style="left:1784px;top:402.25px;width:106px;height:18px;background:#1e1e1e;"></div>
<div class="t" style="left:1667px;top:406.1px;font-size:12px;color:#dcdcdc;">8</div>
<svg class="a" style="left:1706px;top:403.2px" width="14" height="16" fill="none"><path d="M2 1h7l3 3v11h-10z M9 1v3h3" stroke="#ddd" stroke-width="1.1"/><path d="M4 11l2 2 4-4" stroke="#5cb85c" stroke-width="1.2"/></svg>
<div class="t" style="left:1728px;top:406.1px;font-size:12px;color:#f0f0f0;">Remark</div>
<svg class="a" style="left:1787px;top:404.2px" width="14" height="14" fill="none" stroke="#ddd" stroke-width="1.1"><rect x="1" y="1" width="8" height="8" fill="#555"/><rect x="5" y="5" width="8" height="8" fill="#888"/></svg>
<div class="a" style="left:1658px;top:421.0px;width:27px;height:18px;background:#2e2e2e;"></div>
<div class="a" style="left:1686px;top:421.0px;width:98px;height:18px;background:#0f0f0f;"></div>
<div class="a" style="left:1784px;top:421.0px;width:106px;height:18px;background:#1e1e1e;"></div>
<div class="t" style="left:1667px;top:424.8px;font-size:12px;color:#dcdcdc;">9</div>
<svg class="a" style="left:1706px;top:422.0px" width="14" height="16" fill="none"><path d="M2 1h7l3 3v11h-10z M9 1v3h3" stroke="#ddd" stroke-width="1.1"/><path d="M4 11l2 2 4-4" stroke="#5cb85c" stroke-width="1.2"/></svg>
<div class="t" style="left:1728px;top:424.8px;font-size:12px;color:#f0f0f0;">Supple...</div>
<svg class="a" style="left:1787px;top:423.0px" width="14" height="14" fill="none" stroke="#ddd" stroke-width="1.1"><rect x="1" y="1" width="8" height="8" fill="#555"/><rect x="5" y="5" width="8" height="8" fill="#888"/></svg>
<div class="a" style="left:1686px;top:271px;width:98px;height:18px;background:none;border:2px solid #b0b0b0;box-sizing:border-box;"></div>
<div class="a" style="left:1655px;top:682px;width:235px;height:8px;background:#262626;"></div>
<div class="a" style="left:1655px;top:690px;width:235px;height:100px;background:#333333;"></div>
<div class="a" style="left:1658px;top:701px;width:215px;height:76px;background:#222222;border:1px solid #3e3e3e;box-sizing:border-box;"></div>
<svg class="a" style="left:1874px;top:705px" width="12" height="70"><path d="M2 8l4-4 4 4z" fill="#888"/><path d="M2 62l4 4 4-4z" fill="#888"/></svg>
<div class="a" style="left:1655px;top:784px;width:235px;height:6px;background:#262626;"></div>
<div class="a" style="left:1655px;top:790px;width:235px;height:20px;background:#2d2d2d;"></div>
<div class="t" style="left:1661px;top:792.4px;font-size:11.3px;color:#e8e8e8;">Graphical preview - ESS_Sampl...</div>
<svg class="a" style="left:1836px;top:792px" width="52" height="12"><path d="M1 3h10l-5 6z" fill="#ddd"/><path d="M22 1h6M23 1v5h4v-5M25 6v5M21 6h8" stroke="#ddd" stroke-width="1.2" fill="none"/><path d="M39 2l8 8M47 2l-8 8" stroke="#ddd" stroke-width="1.4"/></svg>
<div class="a" style="left:1657px;top:810px;width:233px;height:230px;background:#ffffff;"></div>
<svg class="a" style="left:0;top:0" width="1890" height="1063" viewBox="0 0 1890 1063" fill="none">
<rect x="1662" y="846" width="225.5" height="159" stroke="#111" stroke-width="1.4"/>
<path d="M1665 849V996" stroke="#222" stroke-width="1.1"/><path d="M1662 848.3H1888" stroke="#222" stroke-width="1.2"/>
<path d="M1689 846v3 M1711 846v3 M1733 846v3 M1755 846v3 M1777 846v3 M1799 846v3 M1821 846v3 M1843 846v3 M1865 846v3" stroke="#fff" stroke-width="0.8"/>
<path d="M1662 996.5H1888 M1662 999.5H1888 M1662 1002.5H1888" stroke="#222" stroke-width="0.9"/>
<path d="M1672.5 996v9 M1683.5 996v9 M1694.5 996v9 M1736 996v9 M1764 996v9 M1814.5 996v9 M1830.5 996v9 M1849.5 996v9 M1868.5 996v9" stroke="#222" stroke-width="0.9"/>
<rect x="1763" y="996.5" width="50" height="8" fill="#fff"/><rect x="1794" y="996" width="5" height="9" fill="#d8202a"/><path d="M1795 1000h3" stroke="#fff" stroke-width="0.8"/>
<rect x="1676.5" y="861.5" width="42" height="35" stroke="#2a8a8a" stroke-width="1.3" stroke-dasharray="4 2"/>
<rect x="1730.5" y="861.5" width="33" height="35" stroke="#2a8a8a" stroke-width="1.3" stroke-dasharray="4 2"/>
<rect x="1676.5" y="938.5" width="42" height="40" stroke="#2a8a8a" stroke-width="1.3" stroke-dasharray="4 2"/>
<path d="M1694.5 958V863.5H1700.5V958 M1700.5 865.5H1707V958" stroke="#e01a1a" stroke-width="1.1"/>
<path d="M1741.5 882V958H1754.5V882" stroke="#e01a1a" stroke-width="1.1"/>
<path d="M1748 882v8" stroke="#2020d0" stroke-width="1.2"/>
<circle cx="1695" cy="872" r="3" fill="#2020d0"/><rect x="1695" y="869" width="5" height="6" fill="#2020d0"/>
<rect x="1736.5" y="865" width="22" height="17" fill="#2020d0"/>
<path d="M1738 868.5h19M1738 871.5h19M1738 874.5h19M1738 877.5h19" stroke="#fff" stroke-width="0.8"/>
<rect x="1689.5" y="959.5" width="22" height="16" fill="#2020d0"/>
<path d="M1691 963h19M1691 966h19M1691 969h19M1691 972h19" stroke="#fff" stroke-width="0.8"/>
<path d="M1692 947H1716" stroke="#2020d0" stroke-width="1.4"/>
<rect x="1740" y="950" width="3" height="4" fill="#2020d0"/>
<path d="M1700 979h10 M1741 978h10" stroke="#888" stroke-width="0.8"/>
</svg>
</body></html>
